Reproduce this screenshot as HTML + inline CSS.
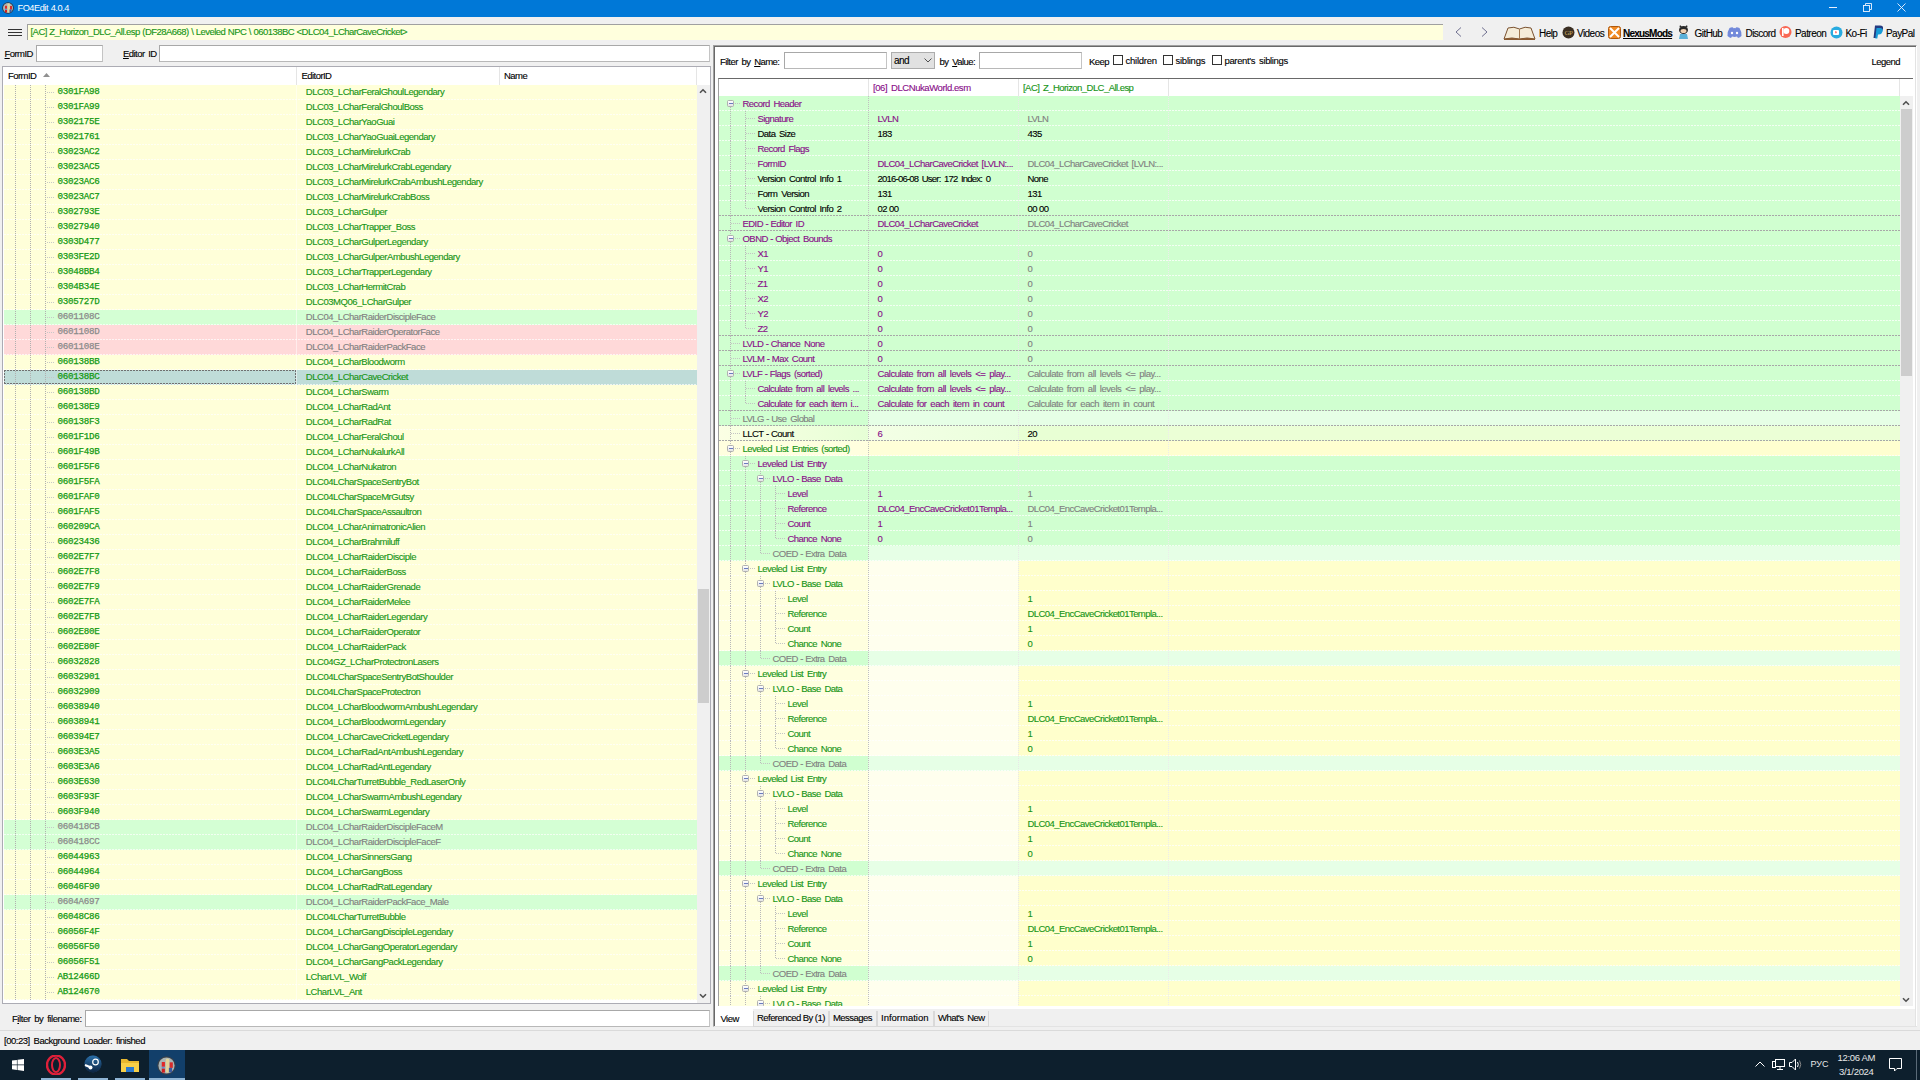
<!DOCTYPE html><html><head><meta charset="utf-8"><style>
*{margin:0;padding:0;box-sizing:border-box}
html,body{width:1920px;height:1080px;overflow:hidden}
body{background:#f0f0f0;position:relative;font-family:"Liberation Sans",sans-serif;font-size:9.5px;letter-spacing:-0.55px;word-spacing:1.6px;color:#000}
.a{position:absolute}
.t{position:absolute;white-space:nowrap;-webkit-text-stroke:0.12px currentColor}
.m{font-family:"Liberation Mono",monospace;letter-spacing:-0.25px;-webkit-text-stroke:0.25px currentColor}
u{text-decoration:underline}
</style></head><body>

<div class="a" style="left:0px;top:0px;width:1920px;height:17px;background:#0078d7"></div>
<svg class="a" style="left:1.5px;top:2px" width="12" height="12" viewBox="0 0 12 12"><circle cx="6" cy="6" r="5.8" fill="#2a3038"/><circle cx="6" cy="6" r="5" fill="#a9b4b6"/><rect x="5.5" y="1.5" width="2.3" height="9" rx="1" fill="#e2d49a"/><rect x="3" y="3.8" width="2" height="3" fill="#e02828"/><rect x="3" y="6.8" width="1.8" height="1.2" fill="#6a8ac8"/><rect x="3" y="8" width="2" height="2.5" fill="#d02020"/><rect x="8" y="4" width="2" height="3.5" fill="#d82c2c"/><rect x="7.5" y="7.5" width="2" height="2.8" fill="#3a5aa0"/></svg>
<div class="t" style="left:17.5px;top:0.0px;line-height:17px;height:17px;color:#fff;font-size:9.2px;letter-spacing:-0.45px;word-spacing:0.5px;-webkit-text-stroke:0">FO4Edit 4.0.4</div>
<div class="a" style="left:1829px;top:7px;width:8px;height:1px;background:#e8f0ff"></div>
<svg class="a" style="left:1863px;top:3px" width="9" height="9" viewBox="0 0 9 9"><path d="M2.5 2V0.5H8.5V6.5H7" fill="none" stroke="#eef4ff" stroke-width="0.9"/><rect x="0.5" y="2.5" width="6" height="6" fill="none" stroke="#eef4ff" stroke-width="0.9"/></svg>
<svg class="a" style="left:1897px;top:3px" width="9" height="9" viewBox="0 0 9 9"><path d="M0.5 0.5L8.5 8.5M8.5 0.5L0.5 8.5" stroke="#eef4ff" stroke-width="0.9"/></svg>
<div class="a" style="left:8px;top:29px;width:14px;height:1px;background:#333"></div>
<div class="a" style="left:8px;top:32px;width:14px;height:1px;background:#333"></div>
<div class="a" style="left:8px;top:35px;width:14px;height:1px;background:#333"></div>
<div class="a" style="left:27px;top:24px;width:1416px;height:16px;background:#ffffdd;border-top:1px solid #a0a0a0;border-left:1px solid #a0a0a0"></div>
<div class="t" style="left:30.5px;top:24.0px;line-height:15px;height:15px;color:#159415;word-spacing:0.5px">[AC] Z_Horizon_DLC_All.esp (DF28A668) \ Leveled NPC \ 060138BC &lt;DLC04_LCharCaveCricket&gt;</div>
<svg class="a" style="left:1455px;top:27px" width="7" height="10" viewBox="0 0 7 10"><path d="M6 0.5L1 5L6 9.5" fill="none" stroke="#707090" stroke-width="1"/></svg>
<svg class="a" style="left:1481px;top:27px" width="7" height="10" viewBox="0 0 7 10"><path d="M1 0.5L6 5L1 9.5" fill="none" stroke="#707090" stroke-width="1"/></svg>
<svg class="a" style="left:1503px;top:26px" width="33" height="14" viewBox="0 0 33 14"><path d="M1 13L5 2Q11 0 16.5 3Q22 0 28 2L32 13Q24 11 16.5 13Q9 11 1 13Z" fill="#f5ecd8" stroke="#7a5230" stroke-width="1"/><path d="M16.5 3V13" stroke="#a07850" stroke-width="1"/><path d="M1 13Q9 11 16.5 13Q24 11 32 13V14H1Z" fill="#8a5a30"/></svg>
<div class="t" style="left:1539px;top:25.5px;line-height:15px;height:15px;font-size:10px">Help</div>
<svg class="a" style="left:1562px;top:26px" width="13" height="13" viewBox="0 0 13 13"><circle cx="6.5" cy="6.5" r="6" fill="#3a2e22"/><text x="6.5" y="9.3" font-size="7" text-anchor="middle" fill="#c8a860" font-family="Liberation Serif">GP</text></svg>
<div class="t" style="left:1577px;top:25.5px;line-height:15px;height:15px;font-size:10px">Videos</div>
<svg class="a" style="left:1608px;top:26px" width="13" height="13" viewBox="0 0 13 13"><rect x="0.5" y="0.5" width="12" height="12" rx="2" fill="#f08a24" stroke="#b05a10"/><path d="M2 2L11 11M11 2L2 11" stroke="#fff" stroke-width="2"/></svg>
<div class="t" style="left:1623px;top:25.5px;line-height:15px;height:15px;font-size:10px;letter-spacing:-0.78px"><b><u>NexusMods</u></b></div>
<svg class="a" style="left:1677px;top:25px" width="13" height="15" viewBox="0 0 13 15"><ellipse cx="6.5" cy="5" rx="4.5" ry="4" fill="#2a2a2a"/><path d="M2.5 2L3 0L5 2M10.5 2L10 0L8 2" fill="#2a2a2a"/><ellipse cx="6.5" cy="6" rx="3" ry="2" fill="#f0d0b0"/><path d="M3 9H10L11 14H2Z" fill="#5ab0d8"/></svg>
<div class="t" style="left:1694.5px;top:25.5px;line-height:15px;height:15px;font-size:10px">GitHub</div>
<svg class="a" style="left:1727px;top:27px" width="15" height="11" viewBox="0 0 15 11"><path d="M2.5 1Q5 0 6 0.5L6.5 1.2Q7.5 1 8.5 1.2L9 0.5Q10 0 12.5 1Q14.8 4.5 14.5 9Q13 10.5 11 11L10 9.5Q7.5 10.4 5 9.5L4 11Q2 10.5 0.5 9Q0.2 4.5 2.5 1Z" fill="#7289da"/><circle cx="5" cy="6" r="1.2" fill="#fff"/><circle cx="10" cy="6" r="1.2" fill="#fff"/></svg>
<div class="t" style="left:1745.5px;top:25.5px;line-height:15px;height:15px;font-size:10px">Discord</div>
<svg class="a" style="left:1779px;top:25px" width="13" height="14" viewBox="0 0 13 14"><circle cx="6.5" cy="7" r="6" fill="#f96854"/><circle cx="7.3" cy="6" r="3" fill="#fff"/><rect x="3" y="3" width="1.6" height="8" fill="#fff"/></svg>
<div class="t" style="left:1795px;top:25.5px;line-height:15px;height:15px;font-size:10px">Patreon</div>
<svg class="a" style="left:1830px;top:26px" width="13" height="13" viewBox="0 0 13 13"><circle cx="6.5" cy="6.5" r="6" fill="#29abe0"/><rect x="3" y="4" width="6" height="5" rx="1" fill="#fff"/><path d="M5 5.5Q6 4.8 7 6Q6 7.5 6 7.8Q5 7 5 5.5Z" fill="#ff5e5b"/></svg>
<div class="t" style="left:1845.5px;top:25.5px;line-height:15px;height:15px;font-size:10px">Ko-Fi</div>
<svg class="a" style="left:1873px;top:25px" width="11" height="14" viewBox="0 0 11 14"><path d="M2 0.5H7Q10.5 0.5 10 3.8Q9.4 7.5 5.5 7.5H4L3 13H0.5Z" fill="#253b80"/><path d="M3.5 3H7.5Q10.5 3.5 9.5 6.8Q8.7 9.5 6 9.5H5L4.3 13.5H2.3Z" fill="#179bd7"/></svg>
<div class="t" style="left:1886px;top:25.5px;line-height:15px;height:15px;font-size:10px">PayPal</div>
<div class="t" style="left:4.5px;top:46.0px;line-height:15px;height:15px;"><u>F</u>ormID</div>
<div class="a" style="left:36px;top:45px;width:67px;height:17px;background:#fff;border:1px solid #a8a8a8;border-right-color:#c4c4c4;border-bottom-color:#b8b8b8"></div>
<div class="t" style="left:123px;top:46.0px;line-height:15px;height:15px;"><u>E</u>ditor ID</div>
<div class="a" style="left:159px;top:45px;width:551px;height:17px;background:#fff;border:1px solid #a8a8a8;border-right-color:#c4c4c4;border-bottom-color:#b8b8b8"></div>
<div class="a" style="left:2px;top:66px;width:709px;height:938px;border:1px solid #acacb4;background:#fff"></div>
<div class="t" style="left:8px;top:67.8px;line-height:15px;height:15px;">FormID</div>
<svg class="a" style="left:43px;top:73px" width="7" height="4" viewBox="0 0 7 4"><path d="M0 4L3.5 0L7 4Z" fill="#909090"/></svg>
<div class="a" style="left:296px;top:67px;width:1px;height:18px;background:#e5e5e5"></div>
<div class="t" style="left:301.5px;top:67.8px;line-height:15px;height:15px;">EditorID</div>
<div class="a" style="left:499px;top:67px;width:1px;height:18px;background:#e5e5e5"></div>
<div class="a" style="left:696px;top:67px;width:1px;height:18px;background:#e5e5e5"></div>
<div class="t" style="left:504px;top:67.8px;line-height:15px;height:15px;">Name</div>
<div class="a" style="left:4px;top:85px;width:693px;height:15px;background:#ffffd9"></div>
<div class="a" style="left:4px;top:99px;width:693px;height:1px;background:repeating-linear-gradient(to right,rgba(255,255,255,0.7) 0 2px,transparent 2px 3px)"></div>
<div class="a" style="left:47px;top:92px;width:8px;height:1px;background:repeating-linear-gradient(to right,#c8c8c8 0 1px,transparent 1px 2px)"></div>
<div class="t m" style="left:57.5px;top:84px;line-height:15px;height:15px;color:#139a13;font-size:9.2px">0301FA98</div>
<div class="t" style="left:305.8px;top:84.0px;line-height:15px;height:15px;color:#159415;letter-spacing:-0.47px">DLC03_LCharFeralGhoulLegendary</div>
<div class="a" style="left:4px;top:100px;width:693px;height:15px;background:#ffffd9"></div>
<div class="a" style="left:4px;top:114px;width:693px;height:1px;background:repeating-linear-gradient(to right,rgba(255,255,255,0.7) 0 2px,transparent 2px 3px)"></div>
<div class="a" style="left:47px;top:107px;width:8px;height:1px;background:repeating-linear-gradient(to right,#c8c8c8 0 1px,transparent 1px 2px)"></div>
<div class="t m" style="left:57.5px;top:99px;line-height:15px;height:15px;color:#139a13;font-size:9.2px">0301FA99</div>
<div class="t" style="left:305.8px;top:99.0px;line-height:15px;height:15px;color:#159415;letter-spacing:-0.47px">DLC03_LCharFeralGhoulBoss</div>
<div class="a" style="left:4px;top:115px;width:693px;height:15px;background:#ffffd9"></div>
<div class="a" style="left:4px;top:129px;width:693px;height:1px;background:repeating-linear-gradient(to right,rgba(255,255,255,0.7) 0 2px,transparent 2px 3px)"></div>
<div class="a" style="left:47px;top:122px;width:8px;height:1px;background:repeating-linear-gradient(to right,#c8c8c8 0 1px,transparent 1px 2px)"></div>
<div class="t m" style="left:57.5px;top:114px;line-height:15px;height:15px;color:#139a13;font-size:9.2px">0302175E</div>
<div class="t" style="left:305.8px;top:114.0px;line-height:15px;height:15px;color:#159415;letter-spacing:-0.47px">DLC03_LCharYaoGuai</div>
<div class="a" style="left:4px;top:130px;width:693px;height:15px;background:#ffffd9"></div>
<div class="a" style="left:4px;top:144px;width:693px;height:1px;background:repeating-linear-gradient(to right,rgba(255,255,255,0.7) 0 2px,transparent 2px 3px)"></div>
<div class="a" style="left:47px;top:137px;width:8px;height:1px;background:repeating-linear-gradient(to right,#c8c8c8 0 1px,transparent 1px 2px)"></div>
<div class="t m" style="left:57.5px;top:129px;line-height:15px;height:15px;color:#139a13;font-size:9.2px">03021761</div>
<div class="t" style="left:305.8px;top:129.0px;line-height:15px;height:15px;color:#159415;letter-spacing:-0.47px">DLC03_LCharYaoGuaiLegendary</div>
<div class="a" style="left:4px;top:145px;width:693px;height:15px;background:#ffffd9"></div>
<div class="a" style="left:4px;top:159px;width:693px;height:1px;background:repeating-linear-gradient(to right,rgba(255,255,255,0.7) 0 2px,transparent 2px 3px)"></div>
<div class="a" style="left:47px;top:152px;width:8px;height:1px;background:repeating-linear-gradient(to right,#c8c8c8 0 1px,transparent 1px 2px)"></div>
<div class="t m" style="left:57.5px;top:144px;line-height:15px;height:15px;color:#139a13;font-size:9.2px">03023AC2</div>
<div class="t" style="left:305.8px;top:144.0px;line-height:15px;height:15px;color:#159415;letter-spacing:-0.47px">DLC03_LCharMirelurkCrab</div>
<div class="a" style="left:4px;top:160px;width:693px;height:15px;background:#ffffd9"></div>
<div class="a" style="left:4px;top:174px;width:693px;height:1px;background:repeating-linear-gradient(to right,rgba(255,255,255,0.7) 0 2px,transparent 2px 3px)"></div>
<div class="a" style="left:47px;top:167px;width:8px;height:1px;background:repeating-linear-gradient(to right,#c8c8c8 0 1px,transparent 1px 2px)"></div>
<div class="t m" style="left:57.5px;top:159px;line-height:15px;height:15px;color:#139a13;font-size:9.2px">03023AC5</div>
<div class="t" style="left:305.8px;top:159.0px;line-height:15px;height:15px;color:#159415;letter-spacing:-0.47px">DLC03_LCharMirelurkCrabLegendary</div>
<div class="a" style="left:4px;top:175px;width:693px;height:15px;background:#ffffd9"></div>
<div class="a" style="left:4px;top:189px;width:693px;height:1px;background:repeating-linear-gradient(to right,rgba(255,255,255,0.7) 0 2px,transparent 2px 3px)"></div>
<div class="a" style="left:47px;top:182px;width:8px;height:1px;background:repeating-linear-gradient(to right,#c8c8c8 0 1px,transparent 1px 2px)"></div>
<div class="t m" style="left:57.5px;top:174px;line-height:15px;height:15px;color:#139a13;font-size:9.2px">03023AC6</div>
<div class="t" style="left:305.8px;top:174.0px;line-height:15px;height:15px;color:#159415;letter-spacing:-0.47px">DLC03_LCharMirelurkCrabAmbushLegendary</div>
<div class="a" style="left:4px;top:190px;width:693px;height:15px;background:#ffffd9"></div>
<div class="a" style="left:4px;top:204px;width:693px;height:1px;background:repeating-linear-gradient(to right,rgba(255,255,255,0.7) 0 2px,transparent 2px 3px)"></div>
<div class="a" style="left:47px;top:197px;width:8px;height:1px;background:repeating-linear-gradient(to right,#c8c8c8 0 1px,transparent 1px 2px)"></div>
<div class="t m" style="left:57.5px;top:189px;line-height:15px;height:15px;color:#139a13;font-size:9.2px">03023AC7</div>
<div class="t" style="left:305.8px;top:189.0px;line-height:15px;height:15px;color:#159415;letter-spacing:-0.47px">DLC03_LCharMirelurkCrabBoss</div>
<div class="a" style="left:4px;top:205px;width:693px;height:15px;background:#ffffd9"></div>
<div class="a" style="left:4px;top:219px;width:693px;height:1px;background:repeating-linear-gradient(to right,rgba(255,255,255,0.7) 0 2px,transparent 2px 3px)"></div>
<div class="a" style="left:47px;top:212px;width:8px;height:1px;background:repeating-linear-gradient(to right,#c8c8c8 0 1px,transparent 1px 2px)"></div>
<div class="t m" style="left:57.5px;top:204px;line-height:15px;height:15px;color:#139a13;font-size:9.2px">0302793E</div>
<div class="t" style="left:305.8px;top:204.0px;line-height:15px;height:15px;color:#159415;letter-spacing:-0.47px">DLC03_LCharGulper</div>
<div class="a" style="left:4px;top:220px;width:693px;height:15px;background:#ffffd9"></div>
<div class="a" style="left:4px;top:234px;width:693px;height:1px;background:repeating-linear-gradient(to right,rgba(255,255,255,0.7) 0 2px,transparent 2px 3px)"></div>
<div class="a" style="left:47px;top:227px;width:8px;height:1px;background:repeating-linear-gradient(to right,#c8c8c8 0 1px,transparent 1px 2px)"></div>
<div class="t m" style="left:57.5px;top:219px;line-height:15px;height:15px;color:#139a13;font-size:9.2px">03027940</div>
<div class="t" style="left:305.8px;top:219.0px;line-height:15px;height:15px;color:#159415;letter-spacing:-0.47px">DLC03_LCharTrapper_Boss</div>
<div class="a" style="left:4px;top:235px;width:693px;height:15px;background:#ffffd9"></div>
<div class="a" style="left:4px;top:249px;width:693px;height:1px;background:repeating-linear-gradient(to right,rgba(255,255,255,0.7) 0 2px,transparent 2px 3px)"></div>
<div class="a" style="left:47px;top:242px;width:8px;height:1px;background:repeating-linear-gradient(to right,#c8c8c8 0 1px,transparent 1px 2px)"></div>
<div class="t m" style="left:57.5px;top:234px;line-height:15px;height:15px;color:#139a13;font-size:9.2px">0303D477</div>
<div class="t" style="left:305.8px;top:234.0px;line-height:15px;height:15px;color:#159415;letter-spacing:-0.47px">DLC03_LCharGulperLegendary</div>
<div class="a" style="left:4px;top:250px;width:693px;height:15px;background:#ffffd9"></div>
<div class="a" style="left:4px;top:264px;width:693px;height:1px;background:repeating-linear-gradient(to right,rgba(255,255,255,0.7) 0 2px,transparent 2px 3px)"></div>
<div class="a" style="left:47px;top:257px;width:8px;height:1px;background:repeating-linear-gradient(to right,#c8c8c8 0 1px,transparent 1px 2px)"></div>
<div class="t m" style="left:57.5px;top:249px;line-height:15px;height:15px;color:#139a13;font-size:9.2px">0303FE2D</div>
<div class="t" style="left:305.8px;top:249.0px;line-height:15px;height:15px;color:#159415;letter-spacing:-0.47px">DLC03_LCharGulperAmbushLegendary</div>
<div class="a" style="left:4px;top:265px;width:693px;height:15px;background:#ffffd9"></div>
<div class="a" style="left:4px;top:279px;width:693px;height:1px;background:repeating-linear-gradient(to right,rgba(255,255,255,0.7) 0 2px,transparent 2px 3px)"></div>
<div class="a" style="left:47px;top:272px;width:8px;height:1px;background:repeating-linear-gradient(to right,#c8c8c8 0 1px,transparent 1px 2px)"></div>
<div class="t m" style="left:57.5px;top:264px;line-height:15px;height:15px;color:#139a13;font-size:9.2px">03048BB4</div>
<div class="t" style="left:305.8px;top:264.0px;line-height:15px;height:15px;color:#159415;letter-spacing:-0.47px">DLC03_LCharTrapperLegendary</div>
<div class="a" style="left:4px;top:280px;width:693px;height:15px;background:#ffffd9"></div>
<div class="a" style="left:4px;top:294px;width:693px;height:1px;background:repeating-linear-gradient(to right,rgba(255,255,255,0.7) 0 2px,transparent 2px 3px)"></div>
<div class="a" style="left:47px;top:287px;width:8px;height:1px;background:repeating-linear-gradient(to right,#c8c8c8 0 1px,transparent 1px 2px)"></div>
<div class="t m" style="left:57.5px;top:279px;line-height:15px;height:15px;color:#139a13;font-size:9.2px">0304B34E</div>
<div class="t" style="left:305.8px;top:279.0px;line-height:15px;height:15px;color:#159415;letter-spacing:-0.47px">DLC03_LCharHermitCrab</div>
<div class="a" style="left:4px;top:295px;width:693px;height:15px;background:#ffffd9"></div>
<div class="a" style="left:4px;top:309px;width:693px;height:1px;background:repeating-linear-gradient(to right,rgba(255,255,255,0.7) 0 2px,transparent 2px 3px)"></div>
<div class="a" style="left:47px;top:302px;width:8px;height:1px;background:repeating-linear-gradient(to right,#c8c8c8 0 1px,transparent 1px 2px)"></div>
<div class="t m" style="left:57.5px;top:294px;line-height:15px;height:15px;color:#139a13;font-size:9.2px">0305727D</div>
<div class="t" style="left:305.8px;top:294.0px;line-height:15px;height:15px;color:#159415;letter-spacing:-0.47px">DLC03MQ06_LCharGulper</div>
<div class="a" style="left:4px;top:310px;width:693px;height:15px;background:#d4ffd4"></div>
<div class="a" style="left:4px;top:324px;width:693px;height:1px;background:repeating-linear-gradient(to right,rgba(255,255,255,0.7) 0 2px,transparent 2px 3px)"></div>
<div class="a" style="left:47px;top:317px;width:8px;height:1px;background:repeating-linear-gradient(to right,#c8c8c8 0 1px,transparent 1px 2px)"></div>
<div class="t m" style="left:57.5px;top:309px;line-height:15px;height:15px;color:#8a8a8a;font-size:9.2px">0601108C</div>
<div class="t" style="left:305.8px;top:309.0px;line-height:15px;height:15px;color:#808080;letter-spacing:-0.47px">DLC04_LCharRaiderDiscipleFace</div>
<div class="a" style="left:4px;top:325px;width:693px;height:15px;background:#ffd9d9"></div>
<div class="a" style="left:4px;top:339px;width:693px;height:1px;background:repeating-linear-gradient(to right,rgba(255,255,255,0.7) 0 2px,transparent 2px 3px)"></div>
<div class="a" style="left:47px;top:332px;width:8px;height:1px;background:repeating-linear-gradient(to right,#c8c8c8 0 1px,transparent 1px 2px)"></div>
<div class="t m" style="left:57.5px;top:324px;line-height:15px;height:15px;color:#8a8a8a;font-size:9.2px">0601108D</div>
<div class="t" style="left:305.8px;top:324.0px;line-height:15px;height:15px;color:#808080;letter-spacing:-0.47px">DLC04_LCharRaiderOperatorFace</div>
<div class="a" style="left:4px;top:340px;width:693px;height:15px;background:#ffd9d9"></div>
<div class="a" style="left:4px;top:354px;width:693px;height:1px;background:repeating-linear-gradient(to right,rgba(255,255,255,0.7) 0 2px,transparent 2px 3px)"></div>
<div class="a" style="left:47px;top:347px;width:8px;height:1px;background:repeating-linear-gradient(to right,#c8c8c8 0 1px,transparent 1px 2px)"></div>
<div class="t m" style="left:57.5px;top:339px;line-height:15px;height:15px;color:#8a8a8a;font-size:9.2px">0601108E</div>
<div class="t" style="left:305.8px;top:339.0px;line-height:15px;height:15px;color:#808080;letter-spacing:-0.47px">DLC04_LCharRaiderPackFace</div>
<div class="a" style="left:4px;top:355px;width:693px;height:15px;background:#ffffd9"></div>
<div class="a" style="left:4px;top:369px;width:693px;height:1px;background:repeating-linear-gradient(to right,rgba(255,255,255,0.7) 0 2px,transparent 2px 3px)"></div>
<div class="a" style="left:47px;top:362px;width:8px;height:1px;background:repeating-linear-gradient(to right,#c8c8c8 0 1px,transparent 1px 2px)"></div>
<div class="t m" style="left:57.5px;top:354px;line-height:15px;height:15px;color:#139a13;font-size:9.2px">060138BB</div>
<div class="t" style="left:305.8px;top:354.0px;line-height:15px;height:15px;color:#159415;letter-spacing:-0.47px">DLC04_LCharBloodworm</div>
<div class="a" style="left:4px;top:370px;width:693px;height:15px;background:#bfdcd8"></div>
<div class="a" style="left:4px;top:384px;width:693px;height:1px;background:repeating-linear-gradient(to right,rgba(255,255,255,0.7) 0 2px,transparent 2px 3px)"></div>
<div class="a" style="left:47px;top:377px;width:8px;height:1px;background:repeating-linear-gradient(to right,#c8c8c8 0 1px,transparent 1px 2px)"></div>
<div class="t m" style="left:57.5px;top:369px;line-height:15px;height:15px;color:#139a13;font-size:9.2px">060138BC</div>
<div class="t" style="left:305.8px;top:369.0px;line-height:15px;height:15px;color:#159415;letter-spacing:-0.47px">DLC04_LCharCaveCricket</div>
<div class="a" style="left:4px;top:370px;width:292px;height:1px;background:repeating-linear-gradient(to right,#707070 0 2px,transparent 2px 3px)"></div>
<div class="a" style="left:4px;top:383px;width:292px;height:1px;background:repeating-linear-gradient(to right,#707070 0 2px,transparent 2px 3px)"></div>
<div class="a" style="left:4px;top:370px;width:1px;height:14px;background:repeating-linear-gradient(to bottom,#707070 0 2px,transparent 2px 3px)"></div>
<div class="a" style="left:295px;top:370px;width:1px;height:14px;background:repeating-linear-gradient(to bottom,#707070 0 2px,transparent 2px 3px)"></div>
<div class="a" style="left:4px;top:385px;width:693px;height:15px;background:#ffffd9"></div>
<div class="a" style="left:4px;top:399px;width:693px;height:1px;background:repeating-linear-gradient(to right,rgba(255,255,255,0.7) 0 2px,transparent 2px 3px)"></div>
<div class="a" style="left:47px;top:392px;width:8px;height:1px;background:repeating-linear-gradient(to right,#c8c8c8 0 1px,transparent 1px 2px)"></div>
<div class="t m" style="left:57.5px;top:384px;line-height:15px;height:15px;color:#139a13;font-size:9.2px">060138BD</div>
<div class="t" style="left:305.8px;top:384.0px;line-height:15px;height:15px;color:#159415;letter-spacing:-0.47px">DLC04_LCharSwarm</div>
<div class="a" style="left:4px;top:400px;width:693px;height:15px;background:#ffffd9"></div>
<div class="a" style="left:4px;top:414px;width:693px;height:1px;background:repeating-linear-gradient(to right,rgba(255,255,255,0.7) 0 2px,transparent 2px 3px)"></div>
<div class="a" style="left:47px;top:407px;width:8px;height:1px;background:repeating-linear-gradient(to right,#c8c8c8 0 1px,transparent 1px 2px)"></div>
<div class="t m" style="left:57.5px;top:399px;line-height:15px;height:15px;color:#139a13;font-size:9.2px">060138E9</div>
<div class="t" style="left:305.8px;top:399.0px;line-height:15px;height:15px;color:#159415;letter-spacing:-0.47px">DLC04_LCharRadAnt</div>
<div class="a" style="left:4px;top:415px;width:693px;height:15px;background:#ffffd9"></div>
<div class="a" style="left:4px;top:429px;width:693px;height:1px;background:repeating-linear-gradient(to right,rgba(255,255,255,0.7) 0 2px,transparent 2px 3px)"></div>
<div class="a" style="left:47px;top:422px;width:8px;height:1px;background:repeating-linear-gradient(to right,#c8c8c8 0 1px,transparent 1px 2px)"></div>
<div class="t m" style="left:57.5px;top:414px;line-height:15px;height:15px;color:#139a13;font-size:9.2px">060138F3</div>
<div class="t" style="left:305.8px;top:414.0px;line-height:15px;height:15px;color:#159415;letter-spacing:-0.47px">DLC04_LCharRadRat</div>
<div class="a" style="left:4px;top:430px;width:693px;height:15px;background:#ffffd9"></div>
<div class="a" style="left:4px;top:444px;width:693px;height:1px;background:repeating-linear-gradient(to right,rgba(255,255,255,0.7) 0 2px,transparent 2px 3px)"></div>
<div class="a" style="left:47px;top:437px;width:8px;height:1px;background:repeating-linear-gradient(to right,#c8c8c8 0 1px,transparent 1px 2px)"></div>
<div class="t m" style="left:57.5px;top:429px;line-height:15px;height:15px;color:#139a13;font-size:9.2px">0601F1D6</div>
<div class="t" style="left:305.8px;top:429.0px;line-height:15px;height:15px;color:#159415;letter-spacing:-0.47px">DLC04_LCharFeralGhoul</div>
<div class="a" style="left:4px;top:445px;width:693px;height:15px;background:#ffffd9"></div>
<div class="a" style="left:4px;top:459px;width:693px;height:1px;background:repeating-linear-gradient(to right,rgba(255,255,255,0.7) 0 2px,transparent 2px 3px)"></div>
<div class="a" style="left:47px;top:452px;width:8px;height:1px;background:repeating-linear-gradient(to right,#c8c8c8 0 1px,transparent 1px 2px)"></div>
<div class="t m" style="left:57.5px;top:444px;line-height:15px;height:15px;color:#139a13;font-size:9.2px">0601F49B</div>
<div class="t" style="left:305.8px;top:444.0px;line-height:15px;height:15px;color:#159415;letter-spacing:-0.47px">DLC04_LCharNukalurkAll</div>
<div class="a" style="left:4px;top:460px;width:693px;height:15px;background:#ffffd9"></div>
<div class="a" style="left:4px;top:474px;width:693px;height:1px;background:repeating-linear-gradient(to right,rgba(255,255,255,0.7) 0 2px,transparent 2px 3px)"></div>
<div class="a" style="left:47px;top:467px;width:8px;height:1px;background:repeating-linear-gradient(to right,#c8c8c8 0 1px,transparent 1px 2px)"></div>
<div class="t m" style="left:57.5px;top:459px;line-height:15px;height:15px;color:#139a13;font-size:9.2px">0601F5F6</div>
<div class="t" style="left:305.8px;top:459.0px;line-height:15px;height:15px;color:#159415;letter-spacing:-0.47px">DLC04_LCharNukatron</div>
<div class="a" style="left:4px;top:475px;width:693px;height:15px;background:#ffffd9"></div>
<div class="a" style="left:4px;top:489px;width:693px;height:1px;background:repeating-linear-gradient(to right,rgba(255,255,255,0.7) 0 2px,transparent 2px 3px)"></div>
<div class="a" style="left:47px;top:482px;width:8px;height:1px;background:repeating-linear-gradient(to right,#c8c8c8 0 1px,transparent 1px 2px)"></div>
<div class="t m" style="left:57.5px;top:474px;line-height:15px;height:15px;color:#139a13;font-size:9.2px">0601F5FA</div>
<div class="t" style="left:305.8px;top:474.0px;line-height:15px;height:15px;color:#159415;letter-spacing:-0.47px">DLC04LCharSpaceSentryBot</div>
<div class="a" style="left:4px;top:490px;width:693px;height:15px;background:#ffffd9"></div>
<div class="a" style="left:4px;top:504px;width:693px;height:1px;background:repeating-linear-gradient(to right,rgba(255,255,255,0.7) 0 2px,transparent 2px 3px)"></div>
<div class="a" style="left:47px;top:497px;width:8px;height:1px;background:repeating-linear-gradient(to right,#c8c8c8 0 1px,transparent 1px 2px)"></div>
<div class="t m" style="left:57.5px;top:489px;line-height:15px;height:15px;color:#139a13;font-size:9.2px">0601FAF0</div>
<div class="t" style="left:305.8px;top:489.0px;line-height:15px;height:15px;color:#159415;letter-spacing:-0.47px">DLC04LCharSpaceMrGutsy</div>
<div class="a" style="left:4px;top:505px;width:693px;height:15px;background:#ffffd9"></div>
<div class="a" style="left:4px;top:519px;width:693px;height:1px;background:repeating-linear-gradient(to right,rgba(255,255,255,0.7) 0 2px,transparent 2px 3px)"></div>
<div class="a" style="left:47px;top:512px;width:8px;height:1px;background:repeating-linear-gradient(to right,#c8c8c8 0 1px,transparent 1px 2px)"></div>
<div class="t m" style="left:57.5px;top:504px;line-height:15px;height:15px;color:#139a13;font-size:9.2px">0601FAF5</div>
<div class="t" style="left:305.8px;top:504.0px;line-height:15px;height:15px;color:#159415;letter-spacing:-0.47px">DLC04LCharSpaceAssaultron</div>
<div class="a" style="left:4px;top:520px;width:693px;height:15px;background:#ffffd9"></div>
<div class="a" style="left:4px;top:534px;width:693px;height:1px;background:repeating-linear-gradient(to right,rgba(255,255,255,0.7) 0 2px,transparent 2px 3px)"></div>
<div class="a" style="left:47px;top:527px;width:8px;height:1px;background:repeating-linear-gradient(to right,#c8c8c8 0 1px,transparent 1px 2px)"></div>
<div class="t m" style="left:57.5px;top:519px;line-height:15px;height:15px;color:#139a13;font-size:9.2px">060209CA</div>
<div class="t" style="left:305.8px;top:519.0px;line-height:15px;height:15px;color:#159415;letter-spacing:-0.47px">DLC04_LCharAnimatronicAlien</div>
<div class="a" style="left:4px;top:535px;width:693px;height:15px;background:#ffffd9"></div>
<div class="a" style="left:4px;top:549px;width:693px;height:1px;background:repeating-linear-gradient(to right,rgba(255,255,255,0.7) 0 2px,transparent 2px 3px)"></div>
<div class="a" style="left:47px;top:542px;width:8px;height:1px;background:repeating-linear-gradient(to right,#c8c8c8 0 1px,transparent 1px 2px)"></div>
<div class="t m" style="left:57.5px;top:534px;line-height:15px;height:15px;color:#139a13;font-size:9.2px">06023436</div>
<div class="t" style="left:305.8px;top:534.0px;line-height:15px;height:15px;color:#159415;letter-spacing:-0.47px">DLC04_LCharBrahmiluff</div>
<div class="a" style="left:4px;top:550px;width:693px;height:15px;background:#ffffd9"></div>
<div class="a" style="left:4px;top:564px;width:693px;height:1px;background:repeating-linear-gradient(to right,rgba(255,255,255,0.7) 0 2px,transparent 2px 3px)"></div>
<div class="a" style="left:47px;top:557px;width:8px;height:1px;background:repeating-linear-gradient(to right,#c8c8c8 0 1px,transparent 1px 2px)"></div>
<div class="t m" style="left:57.5px;top:549px;line-height:15px;height:15px;color:#139a13;font-size:9.2px">0602E7F7</div>
<div class="t" style="left:305.8px;top:549.0px;line-height:15px;height:15px;color:#159415;letter-spacing:-0.47px">DLC04_LCharRaiderDisciple</div>
<div class="a" style="left:4px;top:565px;width:693px;height:15px;background:#ffffd9"></div>
<div class="a" style="left:4px;top:579px;width:693px;height:1px;background:repeating-linear-gradient(to right,rgba(255,255,255,0.7) 0 2px,transparent 2px 3px)"></div>
<div class="a" style="left:47px;top:572px;width:8px;height:1px;background:repeating-linear-gradient(to right,#c8c8c8 0 1px,transparent 1px 2px)"></div>
<div class="t m" style="left:57.5px;top:564px;line-height:15px;height:15px;color:#139a13;font-size:9.2px">0602E7F8</div>
<div class="t" style="left:305.8px;top:564.0px;line-height:15px;height:15px;color:#159415;letter-spacing:-0.47px">DLC04_LCharRaiderBoss</div>
<div class="a" style="left:4px;top:580px;width:693px;height:15px;background:#ffffd9"></div>
<div class="a" style="left:4px;top:594px;width:693px;height:1px;background:repeating-linear-gradient(to right,rgba(255,255,255,0.7) 0 2px,transparent 2px 3px)"></div>
<div class="a" style="left:47px;top:587px;width:8px;height:1px;background:repeating-linear-gradient(to right,#c8c8c8 0 1px,transparent 1px 2px)"></div>
<div class="t m" style="left:57.5px;top:579px;line-height:15px;height:15px;color:#139a13;font-size:9.2px">0602E7F9</div>
<div class="t" style="left:305.8px;top:579.0px;line-height:15px;height:15px;color:#159415;letter-spacing:-0.47px">DLC04_LCharRaiderGrenade</div>
<div class="a" style="left:4px;top:595px;width:693px;height:15px;background:#ffffd9"></div>
<div class="a" style="left:4px;top:609px;width:693px;height:1px;background:repeating-linear-gradient(to right,rgba(255,255,255,0.7) 0 2px,transparent 2px 3px)"></div>
<div class="a" style="left:47px;top:602px;width:8px;height:1px;background:repeating-linear-gradient(to right,#c8c8c8 0 1px,transparent 1px 2px)"></div>
<div class="t m" style="left:57.5px;top:594px;line-height:15px;height:15px;color:#139a13;font-size:9.2px">0602E7FA</div>
<div class="t" style="left:305.8px;top:594.0px;line-height:15px;height:15px;color:#159415;letter-spacing:-0.47px">DLC04_LCharRaiderMelee</div>
<div class="a" style="left:4px;top:610px;width:693px;height:15px;background:#ffffd9"></div>
<div class="a" style="left:4px;top:624px;width:693px;height:1px;background:repeating-linear-gradient(to right,rgba(255,255,255,0.7) 0 2px,transparent 2px 3px)"></div>
<div class="a" style="left:47px;top:617px;width:8px;height:1px;background:repeating-linear-gradient(to right,#c8c8c8 0 1px,transparent 1px 2px)"></div>
<div class="t m" style="left:57.5px;top:609px;line-height:15px;height:15px;color:#139a13;font-size:9.2px">0602E7FB</div>
<div class="t" style="left:305.8px;top:609.0px;line-height:15px;height:15px;color:#159415;letter-spacing:-0.47px">DLC04_LCharRaiderLegendary</div>
<div class="a" style="left:4px;top:625px;width:693px;height:15px;background:#ffffd9"></div>
<div class="a" style="left:4px;top:639px;width:693px;height:1px;background:repeating-linear-gradient(to right,rgba(255,255,255,0.7) 0 2px,transparent 2px 3px)"></div>
<div class="a" style="left:47px;top:632px;width:8px;height:1px;background:repeating-linear-gradient(to right,#c8c8c8 0 1px,transparent 1px 2px)"></div>
<div class="t m" style="left:57.5px;top:624px;line-height:15px;height:15px;color:#139a13;font-size:9.2px">0602E80E</div>
<div class="t" style="left:305.8px;top:624.0px;line-height:15px;height:15px;color:#159415;letter-spacing:-0.47px">DLC04_LCharRaiderOperator</div>
<div class="a" style="left:4px;top:640px;width:693px;height:15px;background:#ffffd9"></div>
<div class="a" style="left:4px;top:654px;width:693px;height:1px;background:repeating-linear-gradient(to right,rgba(255,255,255,0.7) 0 2px,transparent 2px 3px)"></div>
<div class="a" style="left:47px;top:647px;width:8px;height:1px;background:repeating-linear-gradient(to right,#c8c8c8 0 1px,transparent 1px 2px)"></div>
<div class="t m" style="left:57.5px;top:639px;line-height:15px;height:15px;color:#139a13;font-size:9.2px">0602E80F</div>
<div class="t" style="left:305.8px;top:639.0px;line-height:15px;height:15px;color:#159415;letter-spacing:-0.47px">DLC04_LCharRaiderPack</div>
<div class="a" style="left:4px;top:655px;width:693px;height:15px;background:#ffffd9"></div>
<div class="a" style="left:4px;top:669px;width:693px;height:1px;background:repeating-linear-gradient(to right,rgba(255,255,255,0.7) 0 2px,transparent 2px 3px)"></div>
<div class="a" style="left:47px;top:662px;width:8px;height:1px;background:repeating-linear-gradient(to right,#c8c8c8 0 1px,transparent 1px 2px)"></div>
<div class="t m" style="left:57.5px;top:654px;line-height:15px;height:15px;color:#139a13;font-size:9.2px">06032828</div>
<div class="t" style="left:305.8px;top:654.0px;line-height:15px;height:15px;color:#159415;letter-spacing:-0.47px">DLC04GZ_LCharProtectronLasers</div>
<div class="a" style="left:4px;top:670px;width:693px;height:15px;background:#ffffd9"></div>
<div class="a" style="left:4px;top:684px;width:693px;height:1px;background:repeating-linear-gradient(to right,rgba(255,255,255,0.7) 0 2px,transparent 2px 3px)"></div>
<div class="a" style="left:47px;top:677px;width:8px;height:1px;background:repeating-linear-gradient(to right,#c8c8c8 0 1px,transparent 1px 2px)"></div>
<div class="t m" style="left:57.5px;top:669px;line-height:15px;height:15px;color:#139a13;font-size:9.2px">06032901</div>
<div class="t" style="left:305.8px;top:669.0px;line-height:15px;height:15px;color:#159415;letter-spacing:-0.47px">DLC04LCharSpaceSentryBotShoulder</div>
<div class="a" style="left:4px;top:685px;width:693px;height:15px;background:#ffffd9"></div>
<div class="a" style="left:4px;top:699px;width:693px;height:1px;background:repeating-linear-gradient(to right,rgba(255,255,255,0.7) 0 2px,transparent 2px 3px)"></div>
<div class="a" style="left:47px;top:692px;width:8px;height:1px;background:repeating-linear-gradient(to right,#c8c8c8 0 1px,transparent 1px 2px)"></div>
<div class="t m" style="left:57.5px;top:684px;line-height:15px;height:15px;color:#139a13;font-size:9.2px">06032909</div>
<div class="t" style="left:305.8px;top:684.0px;line-height:15px;height:15px;color:#159415;letter-spacing:-0.47px">DLC04LCharSpaceProtectron</div>
<div class="a" style="left:4px;top:700px;width:693px;height:15px;background:#ffffd9"></div>
<div class="a" style="left:4px;top:714px;width:693px;height:1px;background:repeating-linear-gradient(to right,rgba(255,255,255,0.7) 0 2px,transparent 2px 3px)"></div>
<div class="a" style="left:47px;top:707px;width:8px;height:1px;background:repeating-linear-gradient(to right,#c8c8c8 0 1px,transparent 1px 2px)"></div>
<div class="t m" style="left:57.5px;top:699px;line-height:15px;height:15px;color:#139a13;font-size:9.2px">06038940</div>
<div class="t" style="left:305.8px;top:699.0px;line-height:15px;height:15px;color:#159415;letter-spacing:-0.47px">DLC04_LCharBloodwormAmbushLegendary</div>
<div class="a" style="left:4px;top:715px;width:693px;height:15px;background:#ffffd9"></div>
<div class="a" style="left:4px;top:729px;width:693px;height:1px;background:repeating-linear-gradient(to right,rgba(255,255,255,0.7) 0 2px,transparent 2px 3px)"></div>
<div class="a" style="left:47px;top:722px;width:8px;height:1px;background:repeating-linear-gradient(to right,#c8c8c8 0 1px,transparent 1px 2px)"></div>
<div class="t m" style="left:57.5px;top:714px;line-height:15px;height:15px;color:#139a13;font-size:9.2px">06038941</div>
<div class="t" style="left:305.8px;top:714.0px;line-height:15px;height:15px;color:#159415;letter-spacing:-0.47px">DLC04_LCharBloodwormLegendary</div>
<div class="a" style="left:4px;top:730px;width:693px;height:15px;background:#ffffd9"></div>
<div class="a" style="left:4px;top:744px;width:693px;height:1px;background:repeating-linear-gradient(to right,rgba(255,255,255,0.7) 0 2px,transparent 2px 3px)"></div>
<div class="a" style="left:47px;top:737px;width:8px;height:1px;background:repeating-linear-gradient(to right,#c8c8c8 0 1px,transparent 1px 2px)"></div>
<div class="t m" style="left:57.5px;top:729px;line-height:15px;height:15px;color:#139a13;font-size:9.2px">060394E7</div>
<div class="t" style="left:305.8px;top:729.0px;line-height:15px;height:15px;color:#159415;letter-spacing:-0.47px">DLC04_LCharCaveCricketLegendary</div>
<div class="a" style="left:4px;top:745px;width:693px;height:15px;background:#ffffd9"></div>
<div class="a" style="left:4px;top:759px;width:693px;height:1px;background:repeating-linear-gradient(to right,rgba(255,255,255,0.7) 0 2px,transparent 2px 3px)"></div>
<div class="a" style="left:47px;top:752px;width:8px;height:1px;background:repeating-linear-gradient(to right,#c8c8c8 0 1px,transparent 1px 2px)"></div>
<div class="t m" style="left:57.5px;top:744px;line-height:15px;height:15px;color:#139a13;font-size:9.2px">0603E3A5</div>
<div class="t" style="left:305.8px;top:744.0px;line-height:15px;height:15px;color:#159415;letter-spacing:-0.47px">DLC04_LCharRadAntAmbushLegendary</div>
<div class="a" style="left:4px;top:760px;width:693px;height:15px;background:#ffffd9"></div>
<div class="a" style="left:4px;top:774px;width:693px;height:1px;background:repeating-linear-gradient(to right,rgba(255,255,255,0.7) 0 2px,transparent 2px 3px)"></div>
<div class="a" style="left:47px;top:767px;width:8px;height:1px;background:repeating-linear-gradient(to right,#c8c8c8 0 1px,transparent 1px 2px)"></div>
<div class="t m" style="left:57.5px;top:759px;line-height:15px;height:15px;color:#139a13;font-size:9.2px">0603E3A6</div>
<div class="t" style="left:305.8px;top:759.0px;line-height:15px;height:15px;color:#159415;letter-spacing:-0.47px">DLC04_LCharRadAntLegendary</div>
<div class="a" style="left:4px;top:775px;width:693px;height:15px;background:#ffffd9"></div>
<div class="a" style="left:4px;top:789px;width:693px;height:1px;background:repeating-linear-gradient(to right,rgba(255,255,255,0.7) 0 2px,transparent 2px 3px)"></div>
<div class="a" style="left:47px;top:782px;width:8px;height:1px;background:repeating-linear-gradient(to right,#c8c8c8 0 1px,transparent 1px 2px)"></div>
<div class="t m" style="left:57.5px;top:774px;line-height:15px;height:15px;color:#139a13;font-size:9.2px">0603E630</div>
<div class="t" style="left:305.8px;top:774.0px;line-height:15px;height:15px;color:#159415;letter-spacing:-0.47px">DLC04LCharTurretBubble_RedLaserOnly</div>
<div class="a" style="left:4px;top:790px;width:693px;height:15px;background:#ffffd9"></div>
<div class="a" style="left:4px;top:804px;width:693px;height:1px;background:repeating-linear-gradient(to right,rgba(255,255,255,0.7) 0 2px,transparent 2px 3px)"></div>
<div class="a" style="left:47px;top:797px;width:8px;height:1px;background:repeating-linear-gradient(to right,#c8c8c8 0 1px,transparent 1px 2px)"></div>
<div class="t m" style="left:57.5px;top:789px;line-height:15px;height:15px;color:#139a13;font-size:9.2px">0603F93F</div>
<div class="t" style="left:305.8px;top:789.0px;line-height:15px;height:15px;color:#159415;letter-spacing:-0.47px">DLC04_LCharSwarmAmbushLegendary</div>
<div class="a" style="left:4px;top:805px;width:693px;height:15px;background:#ffffd9"></div>
<div class="a" style="left:4px;top:819px;width:693px;height:1px;background:repeating-linear-gradient(to right,rgba(255,255,255,0.7) 0 2px,transparent 2px 3px)"></div>
<div class="a" style="left:47px;top:812px;width:8px;height:1px;background:repeating-linear-gradient(to right,#c8c8c8 0 1px,transparent 1px 2px)"></div>
<div class="t m" style="left:57.5px;top:804px;line-height:15px;height:15px;color:#139a13;font-size:9.2px">0603F940</div>
<div class="t" style="left:305.8px;top:804.0px;line-height:15px;height:15px;color:#159415;letter-spacing:-0.47px">DLC04_LCharSwarmLegendary</div>
<div class="a" style="left:4px;top:820px;width:693px;height:15px;background:#d4ffd4"></div>
<div class="a" style="left:4px;top:834px;width:693px;height:1px;background:repeating-linear-gradient(to right,rgba(255,255,255,0.7) 0 2px,transparent 2px 3px)"></div>
<div class="a" style="left:47px;top:827px;width:8px;height:1px;background:repeating-linear-gradient(to right,#c8c8c8 0 1px,transparent 1px 2px)"></div>
<div class="t m" style="left:57.5px;top:819px;line-height:15px;height:15px;color:#8a8a8a;font-size:9.2px">060418CB</div>
<div class="t" style="left:305.8px;top:819.0px;line-height:15px;height:15px;color:#808080;letter-spacing:-0.47px">DLC04_LCharRaiderDiscipleFaceM</div>
<div class="a" style="left:4px;top:835px;width:693px;height:15px;background:#d4ffd4"></div>
<div class="a" style="left:4px;top:849px;width:693px;height:1px;background:repeating-linear-gradient(to right,rgba(255,255,255,0.7) 0 2px,transparent 2px 3px)"></div>
<div class="a" style="left:47px;top:842px;width:8px;height:1px;background:repeating-linear-gradient(to right,#c8c8c8 0 1px,transparent 1px 2px)"></div>
<div class="t m" style="left:57.5px;top:834px;line-height:15px;height:15px;color:#8a8a8a;font-size:9.2px">060418CC</div>
<div class="t" style="left:305.8px;top:834.0px;line-height:15px;height:15px;color:#808080;letter-spacing:-0.47px">DLC04_LCharRaiderDiscipleFaceF</div>
<div class="a" style="left:4px;top:850px;width:693px;height:15px;background:#ffffd9"></div>
<div class="a" style="left:4px;top:864px;width:693px;height:1px;background:repeating-linear-gradient(to right,rgba(255,255,255,0.7) 0 2px,transparent 2px 3px)"></div>
<div class="a" style="left:47px;top:857px;width:8px;height:1px;background:repeating-linear-gradient(to right,#c8c8c8 0 1px,transparent 1px 2px)"></div>
<div class="t m" style="left:57.5px;top:849px;line-height:15px;height:15px;color:#139a13;font-size:9.2px">06044963</div>
<div class="t" style="left:305.8px;top:849.0px;line-height:15px;height:15px;color:#159415;letter-spacing:-0.47px">DLC04_LCharSinnersGang</div>
<div class="a" style="left:4px;top:865px;width:693px;height:15px;background:#ffffd9"></div>
<div class="a" style="left:4px;top:879px;width:693px;height:1px;background:repeating-linear-gradient(to right,rgba(255,255,255,0.7) 0 2px,transparent 2px 3px)"></div>
<div class="a" style="left:47px;top:872px;width:8px;height:1px;background:repeating-linear-gradient(to right,#c8c8c8 0 1px,transparent 1px 2px)"></div>
<div class="t m" style="left:57.5px;top:864px;line-height:15px;height:15px;color:#139a13;font-size:9.2px">06044964</div>
<div class="t" style="left:305.8px;top:864.0px;line-height:15px;height:15px;color:#159415;letter-spacing:-0.47px">DLC04_LCharGangBoss</div>
<div class="a" style="left:4px;top:880px;width:693px;height:15px;background:#ffffd9"></div>
<div class="a" style="left:4px;top:894px;width:693px;height:1px;background:repeating-linear-gradient(to right,rgba(255,255,255,0.7) 0 2px,transparent 2px 3px)"></div>
<div class="a" style="left:47px;top:887px;width:8px;height:1px;background:repeating-linear-gradient(to right,#c8c8c8 0 1px,transparent 1px 2px)"></div>
<div class="t m" style="left:57.5px;top:879px;line-height:15px;height:15px;color:#139a13;font-size:9.2px">06046F90</div>
<div class="t" style="left:305.8px;top:879.0px;line-height:15px;height:15px;color:#159415;letter-spacing:-0.47px">DLC04_LCharRadRatLegendary</div>
<div class="a" style="left:4px;top:895px;width:693px;height:15px;background:#d4ffd4"></div>
<div class="a" style="left:4px;top:909px;width:693px;height:1px;background:repeating-linear-gradient(to right,rgba(255,255,255,0.7) 0 2px,transparent 2px 3px)"></div>
<div class="a" style="left:47px;top:902px;width:8px;height:1px;background:repeating-linear-gradient(to right,#c8c8c8 0 1px,transparent 1px 2px)"></div>
<div class="t m" style="left:57.5px;top:894px;line-height:15px;height:15px;color:#8a8a8a;font-size:9.2px">0604A697</div>
<div class="t" style="left:305.8px;top:894.0px;line-height:15px;height:15px;color:#808080;letter-spacing:-0.47px">DLC04_LCharRaiderPackFace_Male</div>
<div class="a" style="left:4px;top:910px;width:693px;height:15px;background:#ffffd9"></div>
<div class="a" style="left:4px;top:924px;width:693px;height:1px;background:repeating-linear-gradient(to right,rgba(255,255,255,0.7) 0 2px,transparent 2px 3px)"></div>
<div class="a" style="left:47px;top:917px;width:8px;height:1px;background:repeating-linear-gradient(to right,#c8c8c8 0 1px,transparent 1px 2px)"></div>
<div class="t m" style="left:57.5px;top:909px;line-height:15px;height:15px;color:#139a13;font-size:9.2px">06048C86</div>
<div class="t" style="left:305.8px;top:909.0px;line-height:15px;height:15px;color:#159415;letter-spacing:-0.47px">DLC04LCharTurretBubble</div>
<div class="a" style="left:4px;top:925px;width:693px;height:15px;background:#ffffd9"></div>
<div class="a" style="left:4px;top:939px;width:693px;height:1px;background:repeating-linear-gradient(to right,rgba(255,255,255,0.7) 0 2px,transparent 2px 3px)"></div>
<div class="a" style="left:47px;top:932px;width:8px;height:1px;background:repeating-linear-gradient(to right,#c8c8c8 0 1px,transparent 1px 2px)"></div>
<div class="t m" style="left:57.5px;top:924px;line-height:15px;height:15px;color:#139a13;font-size:9.2px">06056F4F</div>
<div class="t" style="left:305.8px;top:924.0px;line-height:15px;height:15px;color:#159415;letter-spacing:-0.47px">DLC04_LCharGangDiscipleLegendary</div>
<div class="a" style="left:4px;top:940px;width:693px;height:15px;background:#ffffd9"></div>
<div class="a" style="left:4px;top:954px;width:693px;height:1px;background:repeating-linear-gradient(to right,rgba(255,255,255,0.7) 0 2px,transparent 2px 3px)"></div>
<div class="a" style="left:47px;top:947px;width:8px;height:1px;background:repeating-linear-gradient(to right,#c8c8c8 0 1px,transparent 1px 2px)"></div>
<div class="t m" style="left:57.5px;top:939px;line-height:15px;height:15px;color:#139a13;font-size:9.2px">06056F50</div>
<div class="t" style="left:305.8px;top:939.0px;line-height:15px;height:15px;color:#159415;letter-spacing:-0.47px">DLC04_LCharGangOperatorLegendary</div>
<div class="a" style="left:4px;top:955px;width:693px;height:15px;background:#ffffd9"></div>
<div class="a" style="left:4px;top:969px;width:693px;height:1px;background:repeating-linear-gradient(to right,rgba(255,255,255,0.7) 0 2px,transparent 2px 3px)"></div>
<div class="a" style="left:47px;top:962px;width:8px;height:1px;background:repeating-linear-gradient(to right,#c8c8c8 0 1px,transparent 1px 2px)"></div>
<div class="t m" style="left:57.5px;top:954px;line-height:15px;height:15px;color:#139a13;font-size:9.2px">06056F51</div>
<div class="t" style="left:305.8px;top:954.0px;line-height:15px;height:15px;color:#159415;letter-spacing:-0.47px">DLC04_LCharGangPackLegendary</div>
<div class="a" style="left:4px;top:970px;width:693px;height:15px;background:#ffffd9"></div>
<div class="a" style="left:4px;top:984px;width:693px;height:1px;background:repeating-linear-gradient(to right,rgba(255,255,255,0.7) 0 2px,transparent 2px 3px)"></div>
<div class="a" style="left:47px;top:977px;width:8px;height:1px;background:repeating-linear-gradient(to right,#c8c8c8 0 1px,transparent 1px 2px)"></div>
<div class="t m" style="left:57.5px;top:969px;line-height:15px;height:15px;color:#139a13;font-size:9.2px">AB12466D</div>
<div class="t" style="left:305.8px;top:969.0px;line-height:15px;height:15px;color:#159415;letter-spacing:-0.47px">LCharLVL_Wolf</div>
<div class="a" style="left:4px;top:985px;width:693px;height:15px;background:#ffffd9"></div>
<div class="a" style="left:4px;top:999px;width:693px;height:1px;background:repeating-linear-gradient(to right,rgba(255,255,255,0.7) 0 2px,transparent 2px 3px)"></div>
<div class="a" style="left:47px;top:992px;width:8px;height:1px;background:repeating-linear-gradient(to right,#c8c8c8 0 1px,transparent 1px 2px)"></div>
<div class="t m" style="left:57.5px;top:984px;line-height:15px;height:15px;color:#139a13;font-size:9.2px">AB124670</div>
<div class="t" style="left:305.8px;top:984.0px;line-height:15px;height:15px;color:#159415;letter-spacing:-0.47px">LCharLVL_Ant</div>
<div class="a" style="left:296px;top:85px;width:1px;height:915px;background:rgba(255,255,255,0.5)"></div>
<div class="a" style="left:15px;top:85px;width:1px;height:915px;background:repeating-linear-gradient(to bottom,#b0b0b0 0 1px,transparent 1px 2px)"></div>
<div class="a" style="left:30px;top:85px;width:1px;height:915px;background:repeating-linear-gradient(to bottom,#b0b0b0 0 1px,transparent 1px 2px)"></div>
<div class="a" style="left:45px;top:85px;width:1px;height:915px;background:repeating-linear-gradient(to bottom,#b0b0b0 0 1px,transparent 1px 2px)"></div>
<div class="a" style="left:697px;top:85px;width:13px;height:918px;background:#f0f0f0"></div>
<svg class="a" style="left:699px;top:88px" width="8" height="6" viewBox="0 0 8 6"><path d="M1 4.8L4 1.8L7 4.8" fill="none" stroke="#505050" stroke-width="1.6"/></svg>
<svg class="a" style="left:699px;top:993px" width="8" height="6" viewBox="0 0 8 6"><path d="M1 1.2L4 4.2L7 1.2" fill="none" stroke="#505050" stroke-width="1.6"/></svg>
<div class="a" style="left:698px;top:589px;width:11px;height:114px;background:#cdcdcd"></div>
<div class="t" style="left:12px;top:1010.5px;line-height:15px;height:15px;letter-spacing:-0.45px">F<u>i</u>lter by filename:</div>
<div class="a" style="left:85px;top:1010px;width:625px;height:17px;background:#fff;border:1px solid #a8a8a8;border-right-color:#c4c4c4;border-bottom-color:#b8b8b8"></div>
<div class="a" style="left:713px;top:45px;width:1204px;height:982px;background:#fff;border-top:1px solid #a0a0a0;border-left:1px solid #a0a0a0;border-right:1px solid #fff;border-bottom:1px solid #e3e3e3;box-shadow:inset 1px 1px 0 #696969,inset -1px 0 0 #e3e3e3"></div>
<div class="t" style="left:720px;top:53.5px;line-height:15px;height:15px;">Filter by <u>N</u>ame:</div>
<div class="a" style="left:784px;top:52px;width:103px;height:17px;background:#fff;border:1px solid #a8a8a8;border-right-color:#c4c4c4;border-bottom-color:#b8b8b8"></div>
<div class="a" style="left:891px;top:52px;width:44px;height:17px;background:#e1e1e1;border:1px solid #adadad"></div>
<div class="t" style="left:894px;top:53.0px;line-height:15px;height:15px;font-size:10px">and</div>
<svg class="a" style="left:924px;top:58px" width="8" height="5" viewBox="0 0 8 5"><path d="M0.5 0.5L4 4L7.5 0.5" fill="none" stroke="#505050" stroke-width="1"/></svg>
<div class="t" style="left:939.5px;top:53.5px;line-height:15px;height:15px;">by <u>V</u>alue:</div>
<div class="a" style="left:979px;top:52px;width:103px;height:17px;background:#fff;border:1px solid #a8a8a8;border-right-color:#c4c4c4;border-bottom-color:#b8b8b8"></div>
<div class="t" style="left:1089px;top:53.5px;line-height:15px;height:15px;">Keep</div>
<div class="a" style="left:1113px;top:55px;width:10px;height:10px;background:#fff;border:1px solid #333"></div>
<div class="t" style="left:1125.5px;top:53.0px;line-height:15px;height:15px;letter-spacing:-0.25px">children</div>
<div class="a" style="left:1163px;top:55px;width:10px;height:10px;background:#fff;border:1px solid #333"></div>
<div class="t" style="left:1175.5px;top:53.0px;line-height:15px;height:15px;letter-spacing:-0.25px">siblings</div>
<div class="a" style="left:1212px;top:55px;width:10px;height:10px;background:#fff;border:1px solid #333"></div>
<div class="t" style="left:1224.5px;top:53.0px;line-height:15px;height:15px;letter-spacing:-0.36px">parent's siblings</div>
<div class="t" style="left:1871.5px;top:54.0px;line-height:15px;height:15px;">Legend</div>
<div class="a" style="left:718px;top:78px;width:1195px;height:928px;border-top:1px solid #696969;border-left:1px solid #a0a0a0;background:#fff"></div>
<div class="t" style="left:873px;top:80.0px;line-height:15px;height:15px;color:#880c88;letter-spacing:-0.42px">[06] DLCNukaWorld.esm</div>
<div class="t" style="left:1023px;top:80.0px;line-height:15px;height:15px;color:#159415">[AC] Z_Horizon_DLC_All.esp</div>
<div class="a" style="left:868px;top:79px;width:1px;height:17px;background:#e5e5e5"></div>
<div class="a" style="left:1018px;top:79px;width:1px;height:17px;background:#e5e5e5"></div>
<div class="a" style="left:1168px;top:79px;width:1px;height:17px;background:#e5e5e5"></div>
<div class="a" style="left:1899px;top:79px;width:1px;height:17px;background:#e5e5e5"></div>
<div class="a" style="left:719px;top:96px;width:1181px;height:910px;overflow:hidden">
<div class="a" style="left:0px;top:0px;width:149px;height:15px;background:#d0ffd0"></div>
<div class="a" style="left:149px;top:0px;width:150px;height:15px;background:#d0ffd0"></div>
<div class="a" style="left:299px;top:0px;width:150px;height:15px;background:#d0ffd0"></div>
<div class="a" style="left:449px;top:0px;width:732px;height:15px;background:#d0ffd0"></div>
<div class="a" style="left:0;top:14px;width:1181px;height:1px;background:repeating-linear-gradient(to right,rgba(255,255,255,0.75) 0 2px,transparent 2px 3px)"></div>
<div class="t" style="left:23.5px;top:-0.5px;line-height:15px;height:15px;color:#880c88">Record Header</div>
<div class="a" style="left:0px;top:15px;width:149px;height:15px;background:#d0ffd0"></div>
<div class="a" style="left:149px;top:15px;width:150px;height:15px;background:#d0ffd0"></div>
<div class="a" style="left:299px;top:15px;width:150px;height:15px;background:#d0ffd0"></div>
<div class="a" style="left:449px;top:15px;width:732px;height:15px;background:#d0ffd0"></div>
<div class="a" style="left:0;top:29px;width:1181px;height:1px;background:repeating-linear-gradient(to right,rgba(255,255,255,0.75) 0 2px,transparent 2px 3px)"></div>
<div class="t" style="left:38.5px;top:14.5px;line-height:15px;height:15px;color:#880c88">Signature</div>
<div class="t" style="left:158.5px;top:14.5px;line-height:15px;height:15px;color:#880c88">LVLN</div>
<div class="t" style="left:308.5px;top:14.5px;line-height:15px;height:15px;color:#808080">LVLN</div>
<div class="a" style="left:0px;top:30px;width:149px;height:15px;background:#d0ffd0"></div>
<div class="a" style="left:149px;top:30px;width:150px;height:15px;background:#d0ffd0"></div>
<div class="a" style="left:299px;top:30px;width:150px;height:15px;background:#d0ffd0"></div>
<div class="a" style="left:449px;top:30px;width:732px;height:15px;background:#d0ffd0"></div>
<div class="a" style="left:0;top:44px;width:1181px;height:1px;background:repeating-linear-gradient(to right,rgba(255,255,255,0.75) 0 2px,transparent 2px 3px)"></div>
<div class="t" style="left:38.5px;top:29.5px;line-height:15px;height:15px;color:#000">Data Size</div>
<div class="t" style="left:158.5px;top:29.5px;line-height:15px;height:15px;color:#000">183</div>
<div class="t" style="left:308.5px;top:29.5px;line-height:15px;height:15px;color:#000">435</div>
<div class="a" style="left:0px;top:45px;width:149px;height:15px;background:#d0ffd0"></div>
<div class="a" style="left:149px;top:45px;width:150px;height:15px;background:#d0ffd0"></div>
<div class="a" style="left:299px;top:45px;width:150px;height:15px;background:#d0ffd0"></div>
<div class="a" style="left:449px;top:45px;width:732px;height:15px;background:#d0ffd0"></div>
<div class="a" style="left:0;top:59px;width:1181px;height:1px;background:repeating-linear-gradient(to right,rgba(255,255,255,0.75) 0 2px,transparent 2px 3px)"></div>
<div class="t" style="left:38.5px;top:44.5px;line-height:15px;height:15px;color:#880c88">Record Flags</div>
<div class="a" style="left:0px;top:60px;width:149px;height:15px;background:#d0ffd0"></div>
<div class="a" style="left:149px;top:60px;width:150px;height:15px;background:#d0ffd0"></div>
<div class="a" style="left:299px;top:60px;width:150px;height:15px;background:#d0ffd0"></div>
<div class="a" style="left:449px;top:60px;width:732px;height:15px;background:#d0ffd0"></div>
<div class="a" style="left:0;top:74px;width:1181px;height:1px;background:repeating-linear-gradient(to right,rgba(255,255,255,0.75) 0 2px,transparent 2px 3px)"></div>
<div class="t" style="left:38.5px;top:59.5px;line-height:15px;height:15px;color:#880c88">FormID</div>
<div class="t" style="left:158.5px;top:59.5px;line-height:15px;height:15px;color:#880c88">DLC04_LCharCaveCricket [LVLN:...</div>
<div class="t" style="left:308.5px;top:59.5px;line-height:15px;height:15px;color:#808080">DLC04_LCharCaveCricket [LVLN:...</div>
<div class="a" style="left:0px;top:75px;width:149px;height:15px;background:#d0ffd0"></div>
<div class="a" style="left:149px;top:75px;width:150px;height:15px;background:#d0ffd0"></div>
<div class="a" style="left:299px;top:75px;width:150px;height:15px;background:#d0ffd0"></div>
<div class="a" style="left:449px;top:75px;width:732px;height:15px;background:#d0ffd0"></div>
<div class="a" style="left:0;top:89px;width:1181px;height:1px;background:repeating-linear-gradient(to right,rgba(255,255,255,0.75) 0 2px,transparent 2px 3px)"></div>
<div class="t" style="left:38.5px;top:74.5px;line-height:15px;height:15px;color:#000">Version Control Info 1</div>
<div class="t" style="left:158.5px;top:74.5px;line-height:15px;height:15px;color:#000"><span style="letter-spacing:-0.78px">2016-06-08 User: 172 Index: 0</span></div>
<div class="t" style="left:308.5px;top:74.5px;line-height:15px;height:15px;color:#000">None</div>
<div class="a" style="left:0px;top:90px;width:149px;height:15px;background:#d0ffd0"></div>
<div class="a" style="left:149px;top:90px;width:150px;height:15px;background:#d0ffd0"></div>
<div class="a" style="left:299px;top:90px;width:150px;height:15px;background:#d0ffd0"></div>
<div class="a" style="left:449px;top:90px;width:732px;height:15px;background:#d0ffd0"></div>
<div class="a" style="left:0;top:104px;width:1181px;height:1px;background:repeating-linear-gradient(to right,rgba(255,255,255,0.75) 0 2px,transparent 2px 3px)"></div>
<div class="t" style="left:38.5px;top:89.5px;line-height:15px;height:15px;color:#000">Form Version</div>
<div class="t" style="left:158.5px;top:89.5px;line-height:15px;height:15px;color:#000">131</div>
<div class="t" style="left:308.5px;top:89.5px;line-height:15px;height:15px;color:#000">131</div>
<div class="a" style="left:0px;top:105px;width:149px;height:15px;background:#d0ffd0"></div>
<div class="a" style="left:149px;top:105px;width:150px;height:15px;background:#d0ffd0"></div>
<div class="a" style="left:299px;top:105px;width:150px;height:15px;background:#d0ffd0"></div>
<div class="a" style="left:449px;top:105px;width:732px;height:15px;background:#d0ffd0"></div>
<div class="a" style="left:0;top:119px;width:1181px;height:1px;background:repeating-linear-gradient(to right,#a8a8a8 0 2px,transparent 2px 3px)"></div>
<div class="t" style="left:38.5px;top:104.5px;line-height:15px;height:15px;color:#000">Version Control Info 2</div>
<div class="t" style="left:158.5px;top:104.5px;line-height:15px;height:15px;color:#000"><span style="word-spacing:0">02 00</span></div>
<div class="t" style="left:308.5px;top:104.5px;line-height:15px;height:15px;color:#000"><span style="word-spacing:0">00 00</span></div>
<div class="a" style="left:0px;top:120px;width:149px;height:15px;background:#d0ffd0"></div>
<div class="a" style="left:149px;top:120px;width:150px;height:15px;background:#d0ffd0"></div>
<div class="a" style="left:299px;top:120px;width:150px;height:15px;background:#d0ffd0"></div>
<div class="a" style="left:449px;top:120px;width:732px;height:15px;background:#d0ffd0"></div>
<div class="a" style="left:0;top:134px;width:1181px;height:1px;background:repeating-linear-gradient(to right,#a8a8a8 0 2px,transparent 2px 3px)"></div>
<div class="t" style="left:23.5px;top:119.5px;line-height:15px;height:15px;color:#880c88">EDID<span style="word-spacing:0.3px"> - </span>Editor ID</div>
<div class="t" style="left:158.5px;top:119.5px;line-height:15px;height:15px;color:#880c88">DLC04_LCharCaveCricket</div>
<div class="t" style="left:308.5px;top:119.5px;line-height:15px;height:15px;color:#808080">DLC04_LCharCaveCricket</div>
<div class="a" style="left:0px;top:135px;width:149px;height:15px;background:#d0ffd0"></div>
<div class="a" style="left:149px;top:135px;width:150px;height:15px;background:#d0ffd0"></div>
<div class="a" style="left:299px;top:135px;width:150px;height:15px;background:#d0ffd0"></div>
<div class="a" style="left:449px;top:135px;width:732px;height:15px;background:#d0ffd0"></div>
<div class="a" style="left:0;top:149px;width:1181px;height:1px;background:repeating-linear-gradient(to right,rgba(255,255,255,0.75) 0 2px,transparent 2px 3px)"></div>
<div class="t" style="left:23.5px;top:134.5px;line-height:15px;height:15px;color:#880c88">OBND<span style="word-spacing:0.3px"> - </span>Object Bounds</div>
<div class="a" style="left:0px;top:150px;width:149px;height:15px;background:#d0ffd0"></div>
<div class="a" style="left:149px;top:150px;width:150px;height:15px;background:#d0ffd0"></div>
<div class="a" style="left:299px;top:150px;width:150px;height:15px;background:#d0ffd0"></div>
<div class="a" style="left:449px;top:150px;width:732px;height:15px;background:#d0ffd0"></div>
<div class="a" style="left:0;top:164px;width:1181px;height:1px;background:repeating-linear-gradient(to right,rgba(255,255,255,0.75) 0 2px,transparent 2px 3px)"></div>
<div class="t" style="left:38.5px;top:149.5px;line-height:15px;height:15px;color:#880c88">X1</div>
<div class="t" style="left:158.5px;top:149.5px;line-height:15px;height:15px;color:#880c88">0</div>
<div class="t" style="left:308.5px;top:149.5px;line-height:15px;height:15px;color:#808080">0</div>
<div class="a" style="left:0px;top:165px;width:149px;height:15px;background:#d0ffd0"></div>
<div class="a" style="left:149px;top:165px;width:150px;height:15px;background:#d0ffd0"></div>
<div class="a" style="left:299px;top:165px;width:150px;height:15px;background:#d0ffd0"></div>
<div class="a" style="left:449px;top:165px;width:732px;height:15px;background:#d0ffd0"></div>
<div class="a" style="left:0;top:179px;width:1181px;height:1px;background:repeating-linear-gradient(to right,rgba(255,255,255,0.75) 0 2px,transparent 2px 3px)"></div>
<div class="t" style="left:38.5px;top:164.5px;line-height:15px;height:15px;color:#880c88">Y1</div>
<div class="t" style="left:158.5px;top:164.5px;line-height:15px;height:15px;color:#880c88">0</div>
<div class="t" style="left:308.5px;top:164.5px;line-height:15px;height:15px;color:#808080">0</div>
<div class="a" style="left:0px;top:180px;width:149px;height:15px;background:#d0ffd0"></div>
<div class="a" style="left:149px;top:180px;width:150px;height:15px;background:#d0ffd0"></div>
<div class="a" style="left:299px;top:180px;width:150px;height:15px;background:#d0ffd0"></div>
<div class="a" style="left:449px;top:180px;width:732px;height:15px;background:#d0ffd0"></div>
<div class="a" style="left:0;top:194px;width:1181px;height:1px;background:repeating-linear-gradient(to right,rgba(255,255,255,0.75) 0 2px,transparent 2px 3px)"></div>
<div class="t" style="left:38.5px;top:179.5px;line-height:15px;height:15px;color:#880c88">Z1</div>
<div class="t" style="left:158.5px;top:179.5px;line-height:15px;height:15px;color:#880c88">0</div>
<div class="t" style="left:308.5px;top:179.5px;line-height:15px;height:15px;color:#808080">0</div>
<div class="a" style="left:0px;top:195px;width:149px;height:15px;background:#d0ffd0"></div>
<div class="a" style="left:149px;top:195px;width:150px;height:15px;background:#d0ffd0"></div>
<div class="a" style="left:299px;top:195px;width:150px;height:15px;background:#d0ffd0"></div>
<div class="a" style="left:449px;top:195px;width:732px;height:15px;background:#d0ffd0"></div>
<div class="a" style="left:0;top:209px;width:1181px;height:1px;background:repeating-linear-gradient(to right,rgba(255,255,255,0.75) 0 2px,transparent 2px 3px)"></div>
<div class="t" style="left:38.5px;top:194.5px;line-height:15px;height:15px;color:#880c88">X2</div>
<div class="t" style="left:158.5px;top:194.5px;line-height:15px;height:15px;color:#880c88">0</div>
<div class="t" style="left:308.5px;top:194.5px;line-height:15px;height:15px;color:#808080">0</div>
<div class="a" style="left:0px;top:210px;width:149px;height:15px;background:#d0ffd0"></div>
<div class="a" style="left:149px;top:210px;width:150px;height:15px;background:#d0ffd0"></div>
<div class="a" style="left:299px;top:210px;width:150px;height:15px;background:#d0ffd0"></div>
<div class="a" style="left:449px;top:210px;width:732px;height:15px;background:#d0ffd0"></div>
<div class="a" style="left:0;top:224px;width:1181px;height:1px;background:repeating-linear-gradient(to right,rgba(255,255,255,0.75) 0 2px,transparent 2px 3px)"></div>
<div class="t" style="left:38.5px;top:209.5px;line-height:15px;height:15px;color:#880c88">Y2</div>
<div class="t" style="left:158.5px;top:209.5px;line-height:15px;height:15px;color:#880c88">0</div>
<div class="t" style="left:308.5px;top:209.5px;line-height:15px;height:15px;color:#808080">0</div>
<div class="a" style="left:0px;top:225px;width:149px;height:15px;background:#d0ffd0"></div>
<div class="a" style="left:149px;top:225px;width:150px;height:15px;background:#d0ffd0"></div>
<div class="a" style="left:299px;top:225px;width:150px;height:15px;background:#d0ffd0"></div>
<div class="a" style="left:449px;top:225px;width:732px;height:15px;background:#d0ffd0"></div>
<div class="a" style="left:0;top:239px;width:1181px;height:1px;background:repeating-linear-gradient(to right,#a8a8a8 0 2px,transparent 2px 3px)"></div>
<div class="t" style="left:38.5px;top:224.5px;line-height:15px;height:15px;color:#880c88">Z2</div>
<div class="t" style="left:158.5px;top:224.5px;line-height:15px;height:15px;color:#880c88">0</div>
<div class="t" style="left:308.5px;top:224.5px;line-height:15px;height:15px;color:#808080">0</div>
<div class="a" style="left:0px;top:240px;width:149px;height:15px;background:#d0ffd0"></div>
<div class="a" style="left:149px;top:240px;width:150px;height:15px;background:#d0ffd0"></div>
<div class="a" style="left:299px;top:240px;width:150px;height:15px;background:#d0ffd0"></div>
<div class="a" style="left:449px;top:240px;width:732px;height:15px;background:#d0ffd0"></div>
<div class="a" style="left:0;top:254px;width:1181px;height:1px;background:repeating-linear-gradient(to right,#a8a8a8 0 2px,transparent 2px 3px)"></div>
<div class="t" style="left:23.5px;top:239.5px;line-height:15px;height:15px;color:#880c88">LVLD<span style="word-spacing:0.3px"> - </span>Chance None</div>
<div class="t" style="left:158.5px;top:239.5px;line-height:15px;height:15px;color:#880c88">0</div>
<div class="t" style="left:308.5px;top:239.5px;line-height:15px;height:15px;color:#808080">0</div>
<div class="a" style="left:0px;top:255px;width:149px;height:15px;background:#d0ffd0"></div>
<div class="a" style="left:149px;top:255px;width:150px;height:15px;background:#d0ffd0"></div>
<div class="a" style="left:299px;top:255px;width:150px;height:15px;background:#d0ffd0"></div>
<div class="a" style="left:449px;top:255px;width:732px;height:15px;background:#d0ffd0"></div>
<div class="a" style="left:0;top:269px;width:1181px;height:1px;background:repeating-linear-gradient(to right,#a8a8a8 0 2px,transparent 2px 3px)"></div>
<div class="t" style="left:23.5px;top:254.5px;line-height:15px;height:15px;color:#880c88">LVLM<span style="word-spacing:0.3px"> - </span>Max Count</div>
<div class="t" style="left:158.5px;top:254.5px;line-height:15px;height:15px;color:#880c88">0</div>
<div class="t" style="left:308.5px;top:254.5px;line-height:15px;height:15px;color:#808080">0</div>
<div class="a" style="left:0px;top:270px;width:149px;height:15px;background:#d0ffd0"></div>
<div class="a" style="left:149px;top:270px;width:150px;height:15px;background:#d0ffd0"></div>
<div class="a" style="left:299px;top:270px;width:150px;height:15px;background:#d0ffd0"></div>
<div class="a" style="left:449px;top:270px;width:732px;height:15px;background:#d0ffd0"></div>
<div class="a" style="left:0;top:284px;width:1181px;height:1px;background:repeating-linear-gradient(to right,rgba(255,255,255,0.75) 0 2px,transparent 2px 3px)"></div>
<div class="t" style="left:23.5px;top:269.5px;line-height:15px;height:15px;color:#880c88">LVLF<span style="word-spacing:0.3px"> - </span>Flags (sorted)</div>
<div class="t" style="left:158.5px;top:269.5px;line-height:15px;height:15px;color:#880c88;letter-spacing:-0.45px">Calculate from all levels &lt;= play...</div>
<div class="t" style="left:308.5px;top:269.5px;line-height:15px;height:15px;color:#808080;letter-spacing:-0.45px">Calculate from all levels &lt;= play...</div>
<div class="a" style="left:0px;top:285px;width:149px;height:15px;background:#d0ffd0"></div>
<div class="a" style="left:149px;top:285px;width:150px;height:15px;background:#d0ffd0"></div>
<div class="a" style="left:299px;top:285px;width:150px;height:15px;background:#d0ffd0"></div>
<div class="a" style="left:449px;top:285px;width:732px;height:15px;background:#d0ffd0"></div>
<div class="a" style="left:0;top:299px;width:1181px;height:1px;background:repeating-linear-gradient(to right,rgba(255,255,255,0.75) 0 2px,transparent 2px 3px)"></div>
<div class="t" style="left:38.5px;top:284.5px;line-height:15px;height:15px;color:#880c88">Calculate from all levels ...</div>
<div class="t" style="left:158.5px;top:284.5px;line-height:15px;height:15px;color:#880c88;letter-spacing:-0.45px">Calculate from all levels &lt;= play...</div>
<div class="t" style="left:308.5px;top:284.5px;line-height:15px;height:15px;color:#808080;letter-spacing:-0.45px">Calculate from all levels &lt;= play...</div>
<div class="a" style="left:0px;top:300px;width:149px;height:15px;background:#d0ffd0"></div>
<div class="a" style="left:149px;top:300px;width:150px;height:15px;background:#d0ffd0"></div>
<div class="a" style="left:299px;top:300px;width:150px;height:15px;background:#d0ffd0"></div>
<div class="a" style="left:449px;top:300px;width:732px;height:15px;background:#d0ffd0"></div>
<div class="a" style="left:0;top:314px;width:1181px;height:1px;background:repeating-linear-gradient(to right,#a8a8a8 0 2px,transparent 2px 3px)"></div>
<div class="t" style="left:38.5px;top:299.5px;line-height:15px;height:15px;color:#880c88">Calculate for each item i...</div>
<div class="t" style="left:158.5px;top:299.5px;line-height:15px;height:15px;color:#880c88;letter-spacing:-0.45px">Calculate for each item in count</div>
<div class="t" style="left:308.5px;top:299.5px;line-height:15px;height:15px;color:#808080;letter-spacing:-0.45px">Calculate for each item in count</div>
<div class="a" style="left:0px;top:315px;width:149px;height:15px;background:#d0ffd0"></div>
<div class="a" style="left:149px;top:315px;width:150px;height:15px;background:#e6ffe6"></div>
<div class="a" style="left:299px;top:315px;width:150px;height:15px;background:#e6ffe6"></div>
<div class="a" style="left:449px;top:315px;width:732px;height:15px;background:#e6ffe6"></div>
<div class="a" style="left:0;top:329px;width:1181px;height:1px;background:repeating-linear-gradient(to right,#a8a8a8 0 2px,transparent 2px 3px)"></div>
<div class="t" style="left:23.5px;top:314.5px;line-height:15px;height:15px;color:#808080">LVLG<span style="word-spacing:0.3px"> - </span>Use Global</div>
<div class="a" style="left:0px;top:330px;width:149px;height:15px;background:linear-gradient(to right,#fbffe4,#e6ffd6)"></div>
<div class="a" style="left:149px;top:330px;width:150px;height:15px;background:linear-gradient(to right,#f4ffe6,#eaffdc)"></div>
<div class="a" style="left:299px;top:330px;width:150px;height:15px;background:#e8ffd4"></div>
<div class="a" style="left:449px;top:330px;width:732px;height:15px;background:#ebffd6"></div>
<div class="a" style="left:0;top:344px;width:1181px;height:1px;background:repeating-linear-gradient(to right,#a8a8a8 0 2px,transparent 2px 3px)"></div>
<div class="t" style="left:23.5px;top:329.5px;line-height:15px;height:15px;color:#000">LLCT<span style="word-spacing:0.3px"> - </span>Count</div>
<div class="t" style="left:158.5px;top:329.5px;line-height:15px;height:15px;color:#880c88">6</div>
<div class="t" style="left:308.5px;top:329.5px;line-height:15px;height:15px;color:#000">20</div>
<div class="a" style="left:0px;top:345px;width:149px;height:15px;background:#ffffdf"></div>
<div class="a" style="left:149px;top:345px;width:150px;height:15px;background:#ffffd8"></div>
<div class="a" style="left:299px;top:345px;width:150px;height:15px;background:#ffffd0"></div>
<div class="a" style="left:449px;top:345px;width:732px;height:15px;background:#ffffd0"></div>
<div class="a" style="left:0;top:359px;width:1181px;height:1px;background:repeating-linear-gradient(to right,rgba(255,255,255,0.75) 0 2px,transparent 2px 3px)"></div>
<div class="t" style="left:23.5px;top:344.5px;line-height:15px;height:15px;color:#159415">Leveled List Entries (sorted)</div>
<div class="a" style="left:0px;top:360px;width:149px;height:15px;background:#d0ffd0"></div>
<div class="a" style="left:149px;top:360px;width:150px;height:15px;background:#d0ffd0"></div>
<div class="a" style="left:299px;top:360px;width:150px;height:15px;background:#d0ffd0"></div>
<div class="a" style="left:449px;top:360px;width:732px;height:15px;background:#d0ffd0"></div>
<div class="a" style="left:0;top:374px;width:1181px;height:1px;background:repeating-linear-gradient(to right,rgba(255,255,255,0.75) 0 2px,transparent 2px 3px)"></div>
<div class="t" style="left:38.5px;top:359.5px;line-height:15px;height:15px;color:#880c88">Leveled List Entry</div>
<div class="a" style="left:0px;top:375px;width:149px;height:15px;background:#d0ffd0"></div>
<div class="a" style="left:149px;top:375px;width:150px;height:15px;background:#d0ffd0"></div>
<div class="a" style="left:299px;top:375px;width:150px;height:15px;background:#d0ffd0"></div>
<div class="a" style="left:449px;top:375px;width:732px;height:15px;background:#d0ffd0"></div>
<div class="a" style="left:0;top:389px;width:1181px;height:1px;background:repeating-linear-gradient(to right,rgba(255,255,255,0.75) 0 2px,transparent 2px 3px)"></div>
<div class="t" style="left:53.5px;top:374.5px;line-height:15px;height:15px;color:#880c88">LVLO<span style="word-spacing:0.3px"> - </span>Base Data</div>
<div class="a" style="left:0px;top:390px;width:149px;height:15px;background:#d0ffd0"></div>
<div class="a" style="left:149px;top:390px;width:150px;height:15px;background:#d0ffd0"></div>
<div class="a" style="left:299px;top:390px;width:150px;height:15px;background:#d0ffd0"></div>
<div class="a" style="left:449px;top:390px;width:732px;height:15px;background:#d0ffd0"></div>
<div class="a" style="left:0;top:404px;width:1181px;height:1px;background:repeating-linear-gradient(to right,rgba(255,255,255,0.75) 0 2px,transparent 2px 3px)"></div>
<div class="t" style="left:68.5px;top:389.5px;line-height:15px;height:15px;color:#880c88">Level</div>
<div class="t" style="left:158.5px;top:389.5px;line-height:15px;height:15px;color:#880c88">1</div>
<div class="t" style="left:308.5px;top:389.5px;line-height:15px;height:15px;color:#808080">1</div>
<div class="a" style="left:0px;top:405px;width:149px;height:15px;background:#d0ffd0"></div>
<div class="a" style="left:149px;top:405px;width:150px;height:15px;background:#d0ffd0"></div>
<div class="a" style="left:299px;top:405px;width:150px;height:15px;background:#d0ffd0"></div>
<div class="a" style="left:449px;top:405px;width:732px;height:15px;background:#d0ffd0"></div>
<div class="a" style="left:0;top:419px;width:1181px;height:1px;background:repeating-linear-gradient(to right,rgba(255,255,255,0.75) 0 2px,transparent 2px 3px)"></div>
<div class="t" style="left:68.5px;top:404.5px;line-height:15px;height:15px;color:#880c88">Reference</div>
<div class="t" style="left:158.5px;top:404.5px;line-height:15px;height:15px;color:#880c88">DLC04_EncCaveCricket01Templa...</div>
<div class="t" style="left:308.5px;top:404.5px;line-height:15px;height:15px;color:#808080">DLC04_EncCaveCricket01Templa...</div>
<div class="a" style="left:0px;top:420px;width:149px;height:15px;background:#d0ffd0"></div>
<div class="a" style="left:149px;top:420px;width:150px;height:15px;background:#d0ffd0"></div>
<div class="a" style="left:299px;top:420px;width:150px;height:15px;background:#d0ffd0"></div>
<div class="a" style="left:449px;top:420px;width:732px;height:15px;background:#d0ffd0"></div>
<div class="a" style="left:0;top:434px;width:1181px;height:1px;background:repeating-linear-gradient(to right,rgba(255,255,255,0.75) 0 2px,transparent 2px 3px)"></div>
<div class="t" style="left:68.5px;top:419.5px;line-height:15px;height:15px;color:#880c88">Count</div>
<div class="t" style="left:158.5px;top:419.5px;line-height:15px;height:15px;color:#880c88">1</div>
<div class="t" style="left:308.5px;top:419.5px;line-height:15px;height:15px;color:#808080">1</div>
<div class="a" style="left:0px;top:435px;width:149px;height:15px;background:#d0ffd0"></div>
<div class="a" style="left:149px;top:435px;width:150px;height:15px;background:#d0ffd0"></div>
<div class="a" style="left:299px;top:435px;width:150px;height:15px;background:#d0ffd0"></div>
<div class="a" style="left:449px;top:435px;width:732px;height:15px;background:#d0ffd0"></div>
<div class="a" style="left:0;top:449px;width:1181px;height:1px;background:repeating-linear-gradient(to right,rgba(255,255,255,0.75) 0 2px,transparent 2px 3px)"></div>
<div class="t" style="left:68.5px;top:434.5px;line-height:15px;height:15px;color:#880c88">Chance None</div>
<div class="t" style="left:158.5px;top:434.5px;line-height:15px;height:15px;color:#880c88">0</div>
<div class="t" style="left:308.5px;top:434.5px;line-height:15px;height:15px;color:#808080">0</div>
<div class="a" style="left:0px;top:450px;width:149px;height:15px;background:#d0ffd0"></div>
<div class="a" style="left:149px;top:450px;width:150px;height:15px;background:#e6ffe6"></div>
<div class="a" style="left:299px;top:450px;width:150px;height:15px;background:#e6ffe6"></div>
<div class="a" style="left:449px;top:450px;width:732px;height:15px;background:#e6ffe6"></div>
<div class="a" style="left:0;top:464px;width:1181px;height:1px;background:repeating-linear-gradient(to right,rgba(255,255,255,0.75) 0 2px,transparent 2px 3px)"></div>
<div class="t" style="left:53.5px;top:449.5px;line-height:15px;height:15px;color:#808080">COED<span style="word-spacing:0.3px"> - </span>Extra Data</div>
<div class="a" style="left:0px;top:465px;width:149px;height:15px;background:#ffffdf"></div>
<div class="a" style="left:149px;top:465px;width:150px;height:15px;background:#ffffee"></div>
<div class="a" style="left:299px;top:465px;width:150px;height:15px;background:#ffffcc"></div>
<div class="a" style="left:449px;top:465px;width:732px;height:15px;background:#ffffcc"></div>
<div class="a" style="left:0;top:479px;width:1181px;height:1px;background:repeating-linear-gradient(to right,rgba(255,255,255,0.75) 0 2px,transparent 2px 3px)"></div>
<div class="t" style="left:38.5px;top:464.5px;line-height:15px;height:15px;color:#159415">Leveled List Entry</div>
<div class="a" style="left:0px;top:480px;width:149px;height:15px;background:#ffffdf"></div>
<div class="a" style="left:149px;top:480px;width:150px;height:15px;background:#ffffee"></div>
<div class="a" style="left:299px;top:480px;width:150px;height:15px;background:#ffffcc"></div>
<div class="a" style="left:449px;top:480px;width:732px;height:15px;background:#ffffcc"></div>
<div class="a" style="left:0;top:494px;width:1181px;height:1px;background:repeating-linear-gradient(to right,rgba(255,255,255,0.75) 0 2px,transparent 2px 3px)"></div>
<div class="t" style="left:53.5px;top:479.5px;line-height:15px;height:15px;color:#159415">LVLO<span style="word-spacing:0.3px"> - </span>Base Data</div>
<div class="a" style="left:0px;top:495px;width:149px;height:15px;background:#ffffdf"></div>
<div class="a" style="left:149px;top:495px;width:150px;height:15px;background:#ffffee"></div>
<div class="a" style="left:299px;top:495px;width:150px;height:15px;background:#ffffcc"></div>
<div class="a" style="left:449px;top:495px;width:732px;height:15px;background:#ffffcc"></div>
<div class="a" style="left:0;top:509px;width:1181px;height:1px;background:repeating-linear-gradient(to right,rgba(255,255,255,0.75) 0 2px,transparent 2px 3px)"></div>
<div class="t" style="left:68.5px;top:494.5px;line-height:15px;height:15px;color:#159415">Level</div>
<div class="t" style="left:308.5px;top:494.5px;line-height:15px;height:15px;color:#159415">1</div>
<div class="a" style="left:0px;top:510px;width:149px;height:15px;background:#ffffdf"></div>
<div class="a" style="left:149px;top:510px;width:150px;height:15px;background:#ffffee"></div>
<div class="a" style="left:299px;top:510px;width:150px;height:15px;background:#ffffcc"></div>
<div class="a" style="left:449px;top:510px;width:732px;height:15px;background:#ffffcc"></div>
<div class="a" style="left:0;top:524px;width:1181px;height:1px;background:repeating-linear-gradient(to right,rgba(255,255,255,0.75) 0 2px,transparent 2px 3px)"></div>
<div class="t" style="left:68.5px;top:509.5px;line-height:15px;height:15px;color:#159415">Reference</div>
<div class="t" style="left:308.5px;top:509.5px;line-height:15px;height:15px;color:#159415">DLC04_EncCaveCricket01Templa...</div>
<div class="a" style="left:0px;top:525px;width:149px;height:15px;background:#ffffdf"></div>
<div class="a" style="left:149px;top:525px;width:150px;height:15px;background:#ffffee"></div>
<div class="a" style="left:299px;top:525px;width:150px;height:15px;background:#ffffcc"></div>
<div class="a" style="left:449px;top:525px;width:732px;height:15px;background:#ffffcc"></div>
<div class="a" style="left:0;top:539px;width:1181px;height:1px;background:repeating-linear-gradient(to right,rgba(255,255,255,0.75) 0 2px,transparent 2px 3px)"></div>
<div class="t" style="left:68.5px;top:524.5px;line-height:15px;height:15px;color:#159415">Count</div>
<div class="t" style="left:308.5px;top:524.5px;line-height:15px;height:15px;color:#159415">1</div>
<div class="a" style="left:0px;top:540px;width:149px;height:15px;background:#ffffdf"></div>
<div class="a" style="left:149px;top:540px;width:150px;height:15px;background:#ffffee"></div>
<div class="a" style="left:299px;top:540px;width:150px;height:15px;background:#ffffcc"></div>
<div class="a" style="left:449px;top:540px;width:732px;height:15px;background:#ffffcc"></div>
<div class="a" style="left:0;top:554px;width:1181px;height:1px;background:repeating-linear-gradient(to right,rgba(255,255,255,0.75) 0 2px,transparent 2px 3px)"></div>
<div class="t" style="left:68.5px;top:539.5px;line-height:15px;height:15px;color:#159415">Chance None</div>
<div class="t" style="left:308.5px;top:539.5px;line-height:15px;height:15px;color:#159415">0</div>
<div class="a" style="left:0px;top:555px;width:149px;height:15px;background:#d0ffd0"></div>
<div class="a" style="left:149px;top:555px;width:150px;height:15px;background:#e6ffe6"></div>
<div class="a" style="left:299px;top:555px;width:150px;height:15px;background:#e6ffe6"></div>
<div class="a" style="left:449px;top:555px;width:732px;height:15px;background:#e6ffe6"></div>
<div class="a" style="left:0;top:569px;width:1181px;height:1px;background:repeating-linear-gradient(to right,rgba(255,255,255,0.75) 0 2px,transparent 2px 3px)"></div>
<div class="t" style="left:53.5px;top:554.5px;line-height:15px;height:15px;color:#808080">COED<span style="word-spacing:0.3px"> - </span>Extra Data</div>
<div class="a" style="left:0px;top:570px;width:149px;height:15px;background:#ffffdf"></div>
<div class="a" style="left:149px;top:570px;width:150px;height:15px;background:#ffffee"></div>
<div class="a" style="left:299px;top:570px;width:150px;height:15px;background:#ffffcc"></div>
<div class="a" style="left:449px;top:570px;width:732px;height:15px;background:#ffffcc"></div>
<div class="a" style="left:0;top:584px;width:1181px;height:1px;background:repeating-linear-gradient(to right,rgba(255,255,255,0.75) 0 2px,transparent 2px 3px)"></div>
<div class="t" style="left:38.5px;top:569.5px;line-height:15px;height:15px;color:#159415">Leveled List Entry</div>
<div class="a" style="left:0px;top:585px;width:149px;height:15px;background:#ffffdf"></div>
<div class="a" style="left:149px;top:585px;width:150px;height:15px;background:#ffffee"></div>
<div class="a" style="left:299px;top:585px;width:150px;height:15px;background:#ffffcc"></div>
<div class="a" style="left:449px;top:585px;width:732px;height:15px;background:#ffffcc"></div>
<div class="a" style="left:0;top:599px;width:1181px;height:1px;background:repeating-linear-gradient(to right,rgba(255,255,255,0.75) 0 2px,transparent 2px 3px)"></div>
<div class="t" style="left:53.5px;top:584.5px;line-height:15px;height:15px;color:#159415">LVLO<span style="word-spacing:0.3px"> - </span>Base Data</div>
<div class="a" style="left:0px;top:600px;width:149px;height:15px;background:#ffffdf"></div>
<div class="a" style="left:149px;top:600px;width:150px;height:15px;background:#ffffee"></div>
<div class="a" style="left:299px;top:600px;width:150px;height:15px;background:#ffffcc"></div>
<div class="a" style="left:449px;top:600px;width:732px;height:15px;background:#ffffcc"></div>
<div class="a" style="left:0;top:614px;width:1181px;height:1px;background:repeating-linear-gradient(to right,rgba(255,255,255,0.75) 0 2px,transparent 2px 3px)"></div>
<div class="t" style="left:68.5px;top:599.5px;line-height:15px;height:15px;color:#159415">Level</div>
<div class="t" style="left:308.5px;top:599.5px;line-height:15px;height:15px;color:#159415">1</div>
<div class="a" style="left:0px;top:615px;width:149px;height:15px;background:#ffffdf"></div>
<div class="a" style="left:149px;top:615px;width:150px;height:15px;background:#ffffee"></div>
<div class="a" style="left:299px;top:615px;width:150px;height:15px;background:#ffffcc"></div>
<div class="a" style="left:449px;top:615px;width:732px;height:15px;background:#ffffcc"></div>
<div class="a" style="left:0;top:629px;width:1181px;height:1px;background:repeating-linear-gradient(to right,rgba(255,255,255,0.75) 0 2px,transparent 2px 3px)"></div>
<div class="t" style="left:68.5px;top:614.5px;line-height:15px;height:15px;color:#159415">Reference</div>
<div class="t" style="left:308.5px;top:614.5px;line-height:15px;height:15px;color:#159415">DLC04_EncCaveCricket01Templa...</div>
<div class="a" style="left:0px;top:630px;width:149px;height:15px;background:#ffffdf"></div>
<div class="a" style="left:149px;top:630px;width:150px;height:15px;background:#ffffee"></div>
<div class="a" style="left:299px;top:630px;width:150px;height:15px;background:#ffffcc"></div>
<div class="a" style="left:449px;top:630px;width:732px;height:15px;background:#ffffcc"></div>
<div class="a" style="left:0;top:644px;width:1181px;height:1px;background:repeating-linear-gradient(to right,rgba(255,255,255,0.75) 0 2px,transparent 2px 3px)"></div>
<div class="t" style="left:68.5px;top:629.5px;line-height:15px;height:15px;color:#159415">Count</div>
<div class="t" style="left:308.5px;top:629.5px;line-height:15px;height:15px;color:#159415">1</div>
<div class="a" style="left:0px;top:645px;width:149px;height:15px;background:#ffffdf"></div>
<div class="a" style="left:149px;top:645px;width:150px;height:15px;background:#ffffee"></div>
<div class="a" style="left:299px;top:645px;width:150px;height:15px;background:#ffffcc"></div>
<div class="a" style="left:449px;top:645px;width:732px;height:15px;background:#ffffcc"></div>
<div class="a" style="left:0;top:659px;width:1181px;height:1px;background:repeating-linear-gradient(to right,rgba(255,255,255,0.75) 0 2px,transparent 2px 3px)"></div>
<div class="t" style="left:68.5px;top:644.5px;line-height:15px;height:15px;color:#159415">Chance None</div>
<div class="t" style="left:308.5px;top:644.5px;line-height:15px;height:15px;color:#159415">0</div>
<div class="a" style="left:0px;top:660px;width:149px;height:15px;background:#d0ffd0"></div>
<div class="a" style="left:149px;top:660px;width:150px;height:15px;background:#e6ffe6"></div>
<div class="a" style="left:299px;top:660px;width:150px;height:15px;background:#e6ffe6"></div>
<div class="a" style="left:449px;top:660px;width:732px;height:15px;background:#e6ffe6"></div>
<div class="a" style="left:0;top:674px;width:1181px;height:1px;background:repeating-linear-gradient(to right,rgba(255,255,255,0.75) 0 2px,transparent 2px 3px)"></div>
<div class="t" style="left:53.5px;top:659.5px;line-height:15px;height:15px;color:#808080">COED<span style="word-spacing:0.3px"> - </span>Extra Data</div>
<div class="a" style="left:0px;top:675px;width:149px;height:15px;background:#ffffdf"></div>
<div class="a" style="left:149px;top:675px;width:150px;height:15px;background:#ffffee"></div>
<div class="a" style="left:299px;top:675px;width:150px;height:15px;background:#ffffcc"></div>
<div class="a" style="left:449px;top:675px;width:732px;height:15px;background:#ffffcc"></div>
<div class="a" style="left:0;top:689px;width:1181px;height:1px;background:repeating-linear-gradient(to right,rgba(255,255,255,0.75) 0 2px,transparent 2px 3px)"></div>
<div class="t" style="left:38.5px;top:674.5px;line-height:15px;height:15px;color:#159415">Leveled List Entry</div>
<div class="a" style="left:0px;top:690px;width:149px;height:15px;background:#ffffdf"></div>
<div class="a" style="left:149px;top:690px;width:150px;height:15px;background:#ffffee"></div>
<div class="a" style="left:299px;top:690px;width:150px;height:15px;background:#ffffcc"></div>
<div class="a" style="left:449px;top:690px;width:732px;height:15px;background:#ffffcc"></div>
<div class="a" style="left:0;top:704px;width:1181px;height:1px;background:repeating-linear-gradient(to right,rgba(255,255,255,0.75) 0 2px,transparent 2px 3px)"></div>
<div class="t" style="left:53.5px;top:689.5px;line-height:15px;height:15px;color:#159415">LVLO<span style="word-spacing:0.3px"> - </span>Base Data</div>
<div class="a" style="left:0px;top:705px;width:149px;height:15px;background:#ffffdf"></div>
<div class="a" style="left:149px;top:705px;width:150px;height:15px;background:#ffffee"></div>
<div class="a" style="left:299px;top:705px;width:150px;height:15px;background:#ffffcc"></div>
<div class="a" style="left:449px;top:705px;width:732px;height:15px;background:#ffffcc"></div>
<div class="a" style="left:0;top:719px;width:1181px;height:1px;background:repeating-linear-gradient(to right,rgba(255,255,255,0.75) 0 2px,transparent 2px 3px)"></div>
<div class="t" style="left:68.5px;top:704.5px;line-height:15px;height:15px;color:#159415">Level</div>
<div class="t" style="left:308.5px;top:704.5px;line-height:15px;height:15px;color:#159415">1</div>
<div class="a" style="left:0px;top:720px;width:149px;height:15px;background:#ffffdf"></div>
<div class="a" style="left:149px;top:720px;width:150px;height:15px;background:#ffffee"></div>
<div class="a" style="left:299px;top:720px;width:150px;height:15px;background:#ffffcc"></div>
<div class="a" style="left:449px;top:720px;width:732px;height:15px;background:#ffffcc"></div>
<div class="a" style="left:0;top:734px;width:1181px;height:1px;background:repeating-linear-gradient(to right,rgba(255,255,255,0.75) 0 2px,transparent 2px 3px)"></div>
<div class="t" style="left:68.5px;top:719.5px;line-height:15px;height:15px;color:#159415">Reference</div>
<div class="t" style="left:308.5px;top:719.5px;line-height:15px;height:15px;color:#159415">DLC04_EncCaveCricket01Templa...</div>
<div class="a" style="left:0px;top:735px;width:149px;height:15px;background:#ffffdf"></div>
<div class="a" style="left:149px;top:735px;width:150px;height:15px;background:#ffffee"></div>
<div class="a" style="left:299px;top:735px;width:150px;height:15px;background:#ffffcc"></div>
<div class="a" style="left:449px;top:735px;width:732px;height:15px;background:#ffffcc"></div>
<div class="a" style="left:0;top:749px;width:1181px;height:1px;background:repeating-linear-gradient(to right,rgba(255,255,255,0.75) 0 2px,transparent 2px 3px)"></div>
<div class="t" style="left:68.5px;top:734.5px;line-height:15px;height:15px;color:#159415">Count</div>
<div class="t" style="left:308.5px;top:734.5px;line-height:15px;height:15px;color:#159415">1</div>
<div class="a" style="left:0px;top:750px;width:149px;height:15px;background:#ffffdf"></div>
<div class="a" style="left:149px;top:750px;width:150px;height:15px;background:#ffffee"></div>
<div class="a" style="left:299px;top:750px;width:150px;height:15px;background:#ffffcc"></div>
<div class="a" style="left:449px;top:750px;width:732px;height:15px;background:#ffffcc"></div>
<div class="a" style="left:0;top:764px;width:1181px;height:1px;background:repeating-linear-gradient(to right,rgba(255,255,255,0.75) 0 2px,transparent 2px 3px)"></div>
<div class="t" style="left:68.5px;top:749.5px;line-height:15px;height:15px;color:#159415">Chance None</div>
<div class="t" style="left:308.5px;top:749.5px;line-height:15px;height:15px;color:#159415">0</div>
<div class="a" style="left:0px;top:765px;width:149px;height:15px;background:#d0ffd0"></div>
<div class="a" style="left:149px;top:765px;width:150px;height:15px;background:#e6ffe6"></div>
<div class="a" style="left:299px;top:765px;width:150px;height:15px;background:#e6ffe6"></div>
<div class="a" style="left:449px;top:765px;width:732px;height:15px;background:#e6ffe6"></div>
<div class="a" style="left:0;top:779px;width:1181px;height:1px;background:repeating-linear-gradient(to right,rgba(255,255,255,0.75) 0 2px,transparent 2px 3px)"></div>
<div class="t" style="left:53.5px;top:764.5px;line-height:15px;height:15px;color:#808080">COED<span style="word-spacing:0.3px"> - </span>Extra Data</div>
<div class="a" style="left:0px;top:780px;width:149px;height:15px;background:#ffffdf"></div>
<div class="a" style="left:149px;top:780px;width:150px;height:15px;background:#ffffee"></div>
<div class="a" style="left:299px;top:780px;width:150px;height:15px;background:#ffffcc"></div>
<div class="a" style="left:449px;top:780px;width:732px;height:15px;background:#ffffcc"></div>
<div class="a" style="left:0;top:794px;width:1181px;height:1px;background:repeating-linear-gradient(to right,rgba(255,255,255,0.75) 0 2px,transparent 2px 3px)"></div>
<div class="t" style="left:38.5px;top:779.5px;line-height:15px;height:15px;color:#159415">Leveled List Entry</div>
<div class="a" style="left:0px;top:795px;width:149px;height:15px;background:#ffffdf"></div>
<div class="a" style="left:149px;top:795px;width:150px;height:15px;background:#ffffee"></div>
<div class="a" style="left:299px;top:795px;width:150px;height:15px;background:#ffffcc"></div>
<div class="a" style="left:449px;top:795px;width:732px;height:15px;background:#ffffcc"></div>
<div class="a" style="left:0;top:809px;width:1181px;height:1px;background:repeating-linear-gradient(to right,rgba(255,255,255,0.75) 0 2px,transparent 2px 3px)"></div>
<div class="t" style="left:53.5px;top:794.5px;line-height:15px;height:15px;color:#159415">LVLO<span style="word-spacing:0.3px"> - </span>Base Data</div>
<div class="a" style="left:0px;top:810px;width:149px;height:15px;background:#ffffdf"></div>
<div class="a" style="left:149px;top:810px;width:150px;height:15px;background:#ffffee"></div>
<div class="a" style="left:299px;top:810px;width:150px;height:15px;background:#ffffcc"></div>
<div class="a" style="left:449px;top:810px;width:732px;height:15px;background:#ffffcc"></div>
<div class="a" style="left:0;top:824px;width:1181px;height:1px;background:repeating-linear-gradient(to right,rgba(255,255,255,0.75) 0 2px,transparent 2px 3px)"></div>
<div class="t" style="left:68.5px;top:809.5px;line-height:15px;height:15px;color:#159415">Level</div>
<div class="t" style="left:308.5px;top:809.5px;line-height:15px;height:15px;color:#159415">1</div>
<div class="a" style="left:0px;top:825px;width:149px;height:15px;background:#ffffdf"></div>
<div class="a" style="left:149px;top:825px;width:150px;height:15px;background:#ffffee"></div>
<div class="a" style="left:299px;top:825px;width:150px;height:15px;background:#ffffcc"></div>
<div class="a" style="left:449px;top:825px;width:732px;height:15px;background:#ffffcc"></div>
<div class="a" style="left:0;top:839px;width:1181px;height:1px;background:repeating-linear-gradient(to right,rgba(255,255,255,0.75) 0 2px,transparent 2px 3px)"></div>
<div class="t" style="left:68.5px;top:824.5px;line-height:15px;height:15px;color:#159415">Reference</div>
<div class="t" style="left:308.5px;top:824.5px;line-height:15px;height:15px;color:#159415">DLC04_EncCaveCricket01Templa...</div>
<div class="a" style="left:0px;top:840px;width:149px;height:15px;background:#ffffdf"></div>
<div class="a" style="left:149px;top:840px;width:150px;height:15px;background:#ffffee"></div>
<div class="a" style="left:299px;top:840px;width:150px;height:15px;background:#ffffcc"></div>
<div class="a" style="left:449px;top:840px;width:732px;height:15px;background:#ffffcc"></div>
<div class="a" style="left:0;top:854px;width:1181px;height:1px;background:repeating-linear-gradient(to right,rgba(255,255,255,0.75) 0 2px,transparent 2px 3px)"></div>
<div class="t" style="left:68.5px;top:839.5px;line-height:15px;height:15px;color:#159415">Count</div>
<div class="t" style="left:308.5px;top:839.5px;line-height:15px;height:15px;color:#159415">1</div>
<div class="a" style="left:0px;top:855px;width:149px;height:15px;background:#ffffdf"></div>
<div class="a" style="left:149px;top:855px;width:150px;height:15px;background:#ffffee"></div>
<div class="a" style="left:299px;top:855px;width:150px;height:15px;background:#ffffcc"></div>
<div class="a" style="left:449px;top:855px;width:732px;height:15px;background:#ffffcc"></div>
<div class="a" style="left:0;top:869px;width:1181px;height:1px;background:repeating-linear-gradient(to right,rgba(255,255,255,0.75) 0 2px,transparent 2px 3px)"></div>
<div class="t" style="left:68.5px;top:854.5px;line-height:15px;height:15px;color:#159415">Chance None</div>
<div class="t" style="left:308.5px;top:854.5px;line-height:15px;height:15px;color:#159415">0</div>
<div class="a" style="left:0px;top:870px;width:149px;height:15px;background:#d0ffd0"></div>
<div class="a" style="left:149px;top:870px;width:150px;height:15px;background:#e6ffe6"></div>
<div class="a" style="left:299px;top:870px;width:150px;height:15px;background:#e6ffe6"></div>
<div class="a" style="left:449px;top:870px;width:732px;height:15px;background:#e6ffe6"></div>
<div class="a" style="left:0;top:884px;width:1181px;height:1px;background:repeating-linear-gradient(to right,rgba(255,255,255,0.75) 0 2px,transparent 2px 3px)"></div>
<div class="t" style="left:53.5px;top:869.5px;line-height:15px;height:15px;color:#808080">COED<span style="word-spacing:0.3px"> - </span>Extra Data</div>
<div class="a" style="left:0px;top:885px;width:149px;height:15px;background:#ffffdf"></div>
<div class="a" style="left:149px;top:885px;width:150px;height:15px;background:#ffffee"></div>
<div class="a" style="left:299px;top:885px;width:150px;height:15px;background:#ffffcc"></div>
<div class="a" style="left:449px;top:885px;width:732px;height:15px;background:#ffffcc"></div>
<div class="a" style="left:0;top:899px;width:1181px;height:1px;background:repeating-linear-gradient(to right,rgba(255,255,255,0.75) 0 2px,transparent 2px 3px)"></div>
<div class="t" style="left:38.5px;top:884.5px;line-height:15px;height:15px;color:#159415">Leveled List Entry</div>
<div class="a" style="left:0px;top:900px;width:149px;height:15px;background:#ffffdf"></div>
<div class="a" style="left:149px;top:900px;width:150px;height:15px;background:#ffffee"></div>
<div class="a" style="left:299px;top:900px;width:150px;height:15px;background:#ffffcc"></div>
<div class="a" style="left:449px;top:900px;width:732px;height:15px;background:#ffffcc"></div>
<div class="a" style="left:0;top:914px;width:1181px;height:1px;background:repeating-linear-gradient(to right,rgba(255,255,255,0.75) 0 2px,transparent 2px 3px)"></div>
<div class="t" style="left:53.5px;top:899.5px;line-height:15px;height:15px;color:#159415">LVLO<span style="word-spacing:0.3px"> - </span>Base Data</div>
<div class="a" style="left:8px;top:4px;width:7px;height:7px;background:linear-gradient(#fff,#e4e4e4);border:1px solid #b0b0b0;border-radius:1.5px"></div>
<div class="a" style="left:9.5px;top:7px;width:4px;height:1px;background:#6a7cc0"></div>
<div class="a" style="left:16px;top:7px;width:6px;height:1px;background:repeating-linear-gradient(to right,#c4c4c4 0 1px,transparent 1px 2px)"></div>
<div class="a" style="left:11px;top:11px;width:1px;height:4px;background:repeating-linear-gradient(to bottom,#b8b8b8 0 1px,transparent 1px 2px)"></div>
<div class="a" style="left:27px;top:22px;width:9px;height:1px;background:repeating-linear-gradient(to right,#c4c4c4 0 1px,transparent 1px 2px)"></div>
<div class="a" style="left:26px;top:15px;width:1px;height:7px;background:repeating-linear-gradient(to bottom,#b8b8b8 0 1px,transparent 1px 2px)"></div>
<div class="a" style="left:26px;top:23px;width:1px;height:7px;background:repeating-linear-gradient(to bottom,#b8b8b8 0 1px,transparent 1px 2px)"></div>
<div class="a" style="left:11px;top:15px;width:1px;height:15px;background:repeating-linear-gradient(to bottom,#b8b8b8 0 1px,transparent 1px 2px)"></div>
<div class="a" style="left:27px;top:37px;width:9px;height:1px;background:repeating-linear-gradient(to right,#c4c4c4 0 1px,transparent 1px 2px)"></div>
<div class="a" style="left:26px;top:30px;width:1px;height:7px;background:repeating-linear-gradient(to bottom,#b8b8b8 0 1px,transparent 1px 2px)"></div>
<div class="a" style="left:26px;top:38px;width:1px;height:7px;background:repeating-linear-gradient(to bottom,#b8b8b8 0 1px,transparent 1px 2px)"></div>
<div class="a" style="left:11px;top:30px;width:1px;height:15px;background:repeating-linear-gradient(to bottom,#b8b8b8 0 1px,transparent 1px 2px)"></div>
<div class="a" style="left:27px;top:52px;width:9px;height:1px;background:repeating-linear-gradient(to right,#c4c4c4 0 1px,transparent 1px 2px)"></div>
<div class="a" style="left:26px;top:45px;width:1px;height:7px;background:repeating-linear-gradient(to bottom,#b8b8b8 0 1px,transparent 1px 2px)"></div>
<div class="a" style="left:26px;top:53px;width:1px;height:7px;background:repeating-linear-gradient(to bottom,#b8b8b8 0 1px,transparent 1px 2px)"></div>
<div class="a" style="left:11px;top:45px;width:1px;height:15px;background:repeating-linear-gradient(to bottom,#b8b8b8 0 1px,transparent 1px 2px)"></div>
<div class="a" style="left:27px;top:67px;width:9px;height:1px;background:repeating-linear-gradient(to right,#c4c4c4 0 1px,transparent 1px 2px)"></div>
<div class="a" style="left:26px;top:60px;width:1px;height:7px;background:repeating-linear-gradient(to bottom,#b8b8b8 0 1px,transparent 1px 2px)"></div>
<div class="a" style="left:26px;top:68px;width:1px;height:7px;background:repeating-linear-gradient(to bottom,#b8b8b8 0 1px,transparent 1px 2px)"></div>
<div class="a" style="left:11px;top:60px;width:1px;height:15px;background:repeating-linear-gradient(to bottom,#b8b8b8 0 1px,transparent 1px 2px)"></div>
<div class="a" style="left:27px;top:82px;width:9px;height:1px;background:repeating-linear-gradient(to right,#c4c4c4 0 1px,transparent 1px 2px)"></div>
<div class="a" style="left:26px;top:75px;width:1px;height:7px;background:repeating-linear-gradient(to bottom,#b8b8b8 0 1px,transparent 1px 2px)"></div>
<div class="a" style="left:26px;top:83px;width:1px;height:7px;background:repeating-linear-gradient(to bottom,#b8b8b8 0 1px,transparent 1px 2px)"></div>
<div class="a" style="left:11px;top:75px;width:1px;height:15px;background:repeating-linear-gradient(to bottom,#b8b8b8 0 1px,transparent 1px 2px)"></div>
<div class="a" style="left:27px;top:97px;width:9px;height:1px;background:repeating-linear-gradient(to right,#c4c4c4 0 1px,transparent 1px 2px)"></div>
<div class="a" style="left:26px;top:90px;width:1px;height:7px;background:repeating-linear-gradient(to bottom,#b8b8b8 0 1px,transparent 1px 2px)"></div>
<div class="a" style="left:26px;top:98px;width:1px;height:7px;background:repeating-linear-gradient(to bottom,#b8b8b8 0 1px,transparent 1px 2px)"></div>
<div class="a" style="left:11px;top:90px;width:1px;height:15px;background:repeating-linear-gradient(to bottom,#b8b8b8 0 1px,transparent 1px 2px)"></div>
<div class="a" style="left:27px;top:112px;width:9px;height:1px;background:repeating-linear-gradient(to right,#c4c4c4 0 1px,transparent 1px 2px)"></div>
<div class="a" style="left:26px;top:105px;width:1px;height:7px;background:repeating-linear-gradient(to bottom,#b8b8b8 0 1px,transparent 1px 2px)"></div>
<div class="a" style="left:11px;top:105px;width:1px;height:15px;background:repeating-linear-gradient(to bottom,#b8b8b8 0 1px,transparent 1px 2px)"></div>
<div class="a" style="left:12px;top:127px;width:9px;height:1px;background:repeating-linear-gradient(to right,#c4c4c4 0 1px,transparent 1px 2px)"></div>
<div class="a" style="left:11px;top:120px;width:1px;height:7px;background:repeating-linear-gradient(to bottom,#b8b8b8 0 1px,transparent 1px 2px)"></div>
<div class="a" style="left:11px;top:128px;width:1px;height:7px;background:repeating-linear-gradient(to bottom,#b8b8b8 0 1px,transparent 1px 2px)"></div>
<div class="a" style="left:8px;top:139px;width:7px;height:7px;background:linear-gradient(#fff,#e4e4e4);border:1px solid #b0b0b0;border-radius:1.5px"></div>
<div class="a" style="left:9.5px;top:142px;width:4px;height:1px;background:#6a7cc0"></div>
<div class="a" style="left:16px;top:142px;width:6px;height:1px;background:repeating-linear-gradient(to right,#c4c4c4 0 1px,transparent 1px 2px)"></div>
<div class="a" style="left:11px;top:135px;width:1px;height:4px;background:repeating-linear-gradient(to bottom,#b8b8b8 0 1px,transparent 1px 2px)"></div>
<div class="a" style="left:11px;top:146px;width:1px;height:4px;background:repeating-linear-gradient(to bottom,#b8b8b8 0 1px,transparent 1px 2px)"></div>
<div class="a" style="left:27px;top:157px;width:9px;height:1px;background:repeating-linear-gradient(to right,#c4c4c4 0 1px,transparent 1px 2px)"></div>
<div class="a" style="left:26px;top:150px;width:1px;height:7px;background:repeating-linear-gradient(to bottom,#b8b8b8 0 1px,transparent 1px 2px)"></div>
<div class="a" style="left:26px;top:158px;width:1px;height:7px;background:repeating-linear-gradient(to bottom,#b8b8b8 0 1px,transparent 1px 2px)"></div>
<div class="a" style="left:11px;top:150px;width:1px;height:15px;background:repeating-linear-gradient(to bottom,#b8b8b8 0 1px,transparent 1px 2px)"></div>
<div class="a" style="left:27px;top:172px;width:9px;height:1px;background:repeating-linear-gradient(to right,#c4c4c4 0 1px,transparent 1px 2px)"></div>
<div class="a" style="left:26px;top:165px;width:1px;height:7px;background:repeating-linear-gradient(to bottom,#b8b8b8 0 1px,transparent 1px 2px)"></div>
<div class="a" style="left:26px;top:173px;width:1px;height:7px;background:repeating-linear-gradient(to bottom,#b8b8b8 0 1px,transparent 1px 2px)"></div>
<div class="a" style="left:11px;top:165px;width:1px;height:15px;background:repeating-linear-gradient(to bottom,#b8b8b8 0 1px,transparent 1px 2px)"></div>
<div class="a" style="left:27px;top:187px;width:9px;height:1px;background:repeating-linear-gradient(to right,#c4c4c4 0 1px,transparent 1px 2px)"></div>
<div class="a" style="left:26px;top:180px;width:1px;height:7px;background:repeating-linear-gradient(to bottom,#b8b8b8 0 1px,transparent 1px 2px)"></div>
<div class="a" style="left:26px;top:188px;width:1px;height:7px;background:repeating-linear-gradient(to bottom,#b8b8b8 0 1px,transparent 1px 2px)"></div>
<div class="a" style="left:11px;top:180px;width:1px;height:15px;background:repeating-linear-gradient(to bottom,#b8b8b8 0 1px,transparent 1px 2px)"></div>
<div class="a" style="left:27px;top:202px;width:9px;height:1px;background:repeating-linear-gradient(to right,#c4c4c4 0 1px,transparent 1px 2px)"></div>
<div class="a" style="left:26px;top:195px;width:1px;height:7px;background:repeating-linear-gradient(to bottom,#b8b8b8 0 1px,transparent 1px 2px)"></div>
<div class="a" style="left:26px;top:203px;width:1px;height:7px;background:repeating-linear-gradient(to bottom,#b8b8b8 0 1px,transparent 1px 2px)"></div>
<div class="a" style="left:11px;top:195px;width:1px;height:15px;background:repeating-linear-gradient(to bottom,#b8b8b8 0 1px,transparent 1px 2px)"></div>
<div class="a" style="left:27px;top:217px;width:9px;height:1px;background:repeating-linear-gradient(to right,#c4c4c4 0 1px,transparent 1px 2px)"></div>
<div class="a" style="left:26px;top:210px;width:1px;height:7px;background:repeating-linear-gradient(to bottom,#b8b8b8 0 1px,transparent 1px 2px)"></div>
<div class="a" style="left:26px;top:218px;width:1px;height:7px;background:repeating-linear-gradient(to bottom,#b8b8b8 0 1px,transparent 1px 2px)"></div>
<div class="a" style="left:11px;top:210px;width:1px;height:15px;background:repeating-linear-gradient(to bottom,#b8b8b8 0 1px,transparent 1px 2px)"></div>
<div class="a" style="left:27px;top:232px;width:9px;height:1px;background:repeating-linear-gradient(to right,#c4c4c4 0 1px,transparent 1px 2px)"></div>
<div class="a" style="left:26px;top:225px;width:1px;height:7px;background:repeating-linear-gradient(to bottom,#b8b8b8 0 1px,transparent 1px 2px)"></div>
<div class="a" style="left:11px;top:225px;width:1px;height:15px;background:repeating-linear-gradient(to bottom,#b8b8b8 0 1px,transparent 1px 2px)"></div>
<div class="a" style="left:12px;top:247px;width:9px;height:1px;background:repeating-linear-gradient(to right,#c4c4c4 0 1px,transparent 1px 2px)"></div>
<div class="a" style="left:11px;top:240px;width:1px;height:7px;background:repeating-linear-gradient(to bottom,#b8b8b8 0 1px,transparent 1px 2px)"></div>
<div class="a" style="left:11px;top:248px;width:1px;height:7px;background:repeating-linear-gradient(to bottom,#b8b8b8 0 1px,transparent 1px 2px)"></div>
<div class="a" style="left:12px;top:262px;width:9px;height:1px;background:repeating-linear-gradient(to right,#c4c4c4 0 1px,transparent 1px 2px)"></div>
<div class="a" style="left:11px;top:255px;width:1px;height:7px;background:repeating-linear-gradient(to bottom,#b8b8b8 0 1px,transparent 1px 2px)"></div>
<div class="a" style="left:11px;top:263px;width:1px;height:7px;background:repeating-linear-gradient(to bottom,#b8b8b8 0 1px,transparent 1px 2px)"></div>
<div class="a" style="left:8px;top:274px;width:7px;height:7px;background:linear-gradient(#fff,#e4e4e4);border:1px solid #b0b0b0;border-radius:1.5px"></div>
<div class="a" style="left:9.5px;top:277px;width:4px;height:1px;background:#6a7cc0"></div>
<div class="a" style="left:16px;top:277px;width:6px;height:1px;background:repeating-linear-gradient(to right,#c4c4c4 0 1px,transparent 1px 2px)"></div>
<div class="a" style="left:11px;top:270px;width:1px;height:4px;background:repeating-linear-gradient(to bottom,#b8b8b8 0 1px,transparent 1px 2px)"></div>
<div class="a" style="left:11px;top:281px;width:1px;height:4px;background:repeating-linear-gradient(to bottom,#b8b8b8 0 1px,transparent 1px 2px)"></div>
<div class="a" style="left:27px;top:292px;width:9px;height:1px;background:repeating-linear-gradient(to right,#c4c4c4 0 1px,transparent 1px 2px)"></div>
<div class="a" style="left:26px;top:285px;width:1px;height:7px;background:repeating-linear-gradient(to bottom,#b8b8b8 0 1px,transparent 1px 2px)"></div>
<div class="a" style="left:26px;top:293px;width:1px;height:7px;background:repeating-linear-gradient(to bottom,#b8b8b8 0 1px,transparent 1px 2px)"></div>
<div class="a" style="left:11px;top:285px;width:1px;height:15px;background:repeating-linear-gradient(to bottom,#b8b8b8 0 1px,transparent 1px 2px)"></div>
<div class="a" style="left:27px;top:307px;width:9px;height:1px;background:repeating-linear-gradient(to right,#c4c4c4 0 1px,transparent 1px 2px)"></div>
<div class="a" style="left:26px;top:300px;width:1px;height:7px;background:repeating-linear-gradient(to bottom,#b8b8b8 0 1px,transparent 1px 2px)"></div>
<div class="a" style="left:11px;top:300px;width:1px;height:15px;background:repeating-linear-gradient(to bottom,#b8b8b8 0 1px,transparent 1px 2px)"></div>
<div class="a" style="left:12px;top:322px;width:9px;height:1px;background:repeating-linear-gradient(to right,#c4c4c4 0 1px,transparent 1px 2px)"></div>
<div class="a" style="left:11px;top:315px;width:1px;height:7px;background:repeating-linear-gradient(to bottom,#b8b8b8 0 1px,transparent 1px 2px)"></div>
<div class="a" style="left:11px;top:323px;width:1px;height:7px;background:repeating-linear-gradient(to bottom,#b8b8b8 0 1px,transparent 1px 2px)"></div>
<div class="a" style="left:12px;top:337px;width:9px;height:1px;background:repeating-linear-gradient(to right,#c4c4c4 0 1px,transparent 1px 2px)"></div>
<div class="a" style="left:11px;top:330px;width:1px;height:7px;background:repeating-linear-gradient(to bottom,#b8b8b8 0 1px,transparent 1px 2px)"></div>
<div class="a" style="left:11px;top:338px;width:1px;height:7px;background:repeating-linear-gradient(to bottom,#b8b8b8 0 1px,transparent 1px 2px)"></div>
<div class="a" style="left:8px;top:349px;width:7px;height:7px;background:linear-gradient(#fff,#e4e4e4);border:1px solid #b0b0b0;border-radius:1.5px"></div>
<div class="a" style="left:9.5px;top:352px;width:4px;height:1px;background:#6a7cc0"></div>
<div class="a" style="left:16px;top:352px;width:6px;height:1px;background:repeating-linear-gradient(to right,#c4c4c4 0 1px,transparent 1px 2px)"></div>
<div class="a" style="left:11px;top:345px;width:1px;height:4px;background:repeating-linear-gradient(to bottom,#b8b8b8 0 1px,transparent 1px 2px)"></div>
<div class="a" style="left:11px;top:356px;width:1px;height:4px;background:repeating-linear-gradient(to bottom,#b8b8b8 0 1px,transparent 1px 2px)"></div>
<div class="a" style="left:23px;top:364px;width:7px;height:7px;background:linear-gradient(#fff,#e4e4e4);border:1px solid #b0b0b0;border-radius:1.5px"></div>
<div class="a" style="left:24.5px;top:367px;width:4px;height:1px;background:#6a7cc0"></div>
<div class="a" style="left:31px;top:367px;width:6px;height:1px;background:repeating-linear-gradient(to right,#c4c4c4 0 1px,transparent 1px 2px)"></div>
<div class="a" style="left:26px;top:360px;width:1px;height:4px;background:repeating-linear-gradient(to bottom,#b8b8b8 0 1px,transparent 1px 2px)"></div>
<div class="a" style="left:26px;top:371px;width:1px;height:4px;background:repeating-linear-gradient(to bottom,#b8b8b8 0 1px,transparent 1px 2px)"></div>
<div class="a" style="left:11px;top:360px;width:1px;height:15px;background:repeating-linear-gradient(to bottom,#b8b8b8 0 1px,transparent 1px 2px)"></div>
<div class="a" style="left:38px;top:379px;width:7px;height:7px;background:linear-gradient(#fff,#e4e4e4);border:1px solid #b0b0b0;border-radius:1.5px"></div>
<div class="a" style="left:39.5px;top:382px;width:4px;height:1px;background:#6a7cc0"></div>
<div class="a" style="left:46px;top:382px;width:6px;height:1px;background:repeating-linear-gradient(to right,#c4c4c4 0 1px,transparent 1px 2px)"></div>
<div class="a" style="left:41px;top:375px;width:1px;height:4px;background:repeating-linear-gradient(to bottom,#b8b8b8 0 1px,transparent 1px 2px)"></div>
<div class="a" style="left:41px;top:386px;width:1px;height:4px;background:repeating-linear-gradient(to bottom,#b8b8b8 0 1px,transparent 1px 2px)"></div>
<div class="a" style="left:11px;top:375px;width:1px;height:15px;background:repeating-linear-gradient(to bottom,#b8b8b8 0 1px,transparent 1px 2px)"></div>
<div class="a" style="left:26px;top:375px;width:1px;height:15px;background:repeating-linear-gradient(to bottom,#b8b8b8 0 1px,transparent 1px 2px)"></div>
<div class="a" style="left:57px;top:397px;width:9px;height:1px;background:repeating-linear-gradient(to right,#c4c4c4 0 1px,transparent 1px 2px)"></div>
<div class="a" style="left:56px;top:390px;width:1px;height:7px;background:repeating-linear-gradient(to bottom,#b8b8b8 0 1px,transparent 1px 2px)"></div>
<div class="a" style="left:56px;top:398px;width:1px;height:7px;background:repeating-linear-gradient(to bottom,#b8b8b8 0 1px,transparent 1px 2px)"></div>
<div class="a" style="left:11px;top:390px;width:1px;height:15px;background:repeating-linear-gradient(to bottom,#b8b8b8 0 1px,transparent 1px 2px)"></div>
<div class="a" style="left:26px;top:390px;width:1px;height:15px;background:repeating-linear-gradient(to bottom,#b8b8b8 0 1px,transparent 1px 2px)"></div>
<div class="a" style="left:41px;top:390px;width:1px;height:15px;background:repeating-linear-gradient(to bottom,#b8b8b8 0 1px,transparent 1px 2px)"></div>
<div class="a" style="left:57px;top:412px;width:9px;height:1px;background:repeating-linear-gradient(to right,#c4c4c4 0 1px,transparent 1px 2px)"></div>
<div class="a" style="left:56px;top:405px;width:1px;height:7px;background:repeating-linear-gradient(to bottom,#b8b8b8 0 1px,transparent 1px 2px)"></div>
<div class="a" style="left:56px;top:413px;width:1px;height:7px;background:repeating-linear-gradient(to bottom,#b8b8b8 0 1px,transparent 1px 2px)"></div>
<div class="a" style="left:11px;top:405px;width:1px;height:15px;background:repeating-linear-gradient(to bottom,#b8b8b8 0 1px,transparent 1px 2px)"></div>
<div class="a" style="left:26px;top:405px;width:1px;height:15px;background:repeating-linear-gradient(to bottom,#b8b8b8 0 1px,transparent 1px 2px)"></div>
<div class="a" style="left:41px;top:405px;width:1px;height:15px;background:repeating-linear-gradient(to bottom,#b8b8b8 0 1px,transparent 1px 2px)"></div>
<div class="a" style="left:57px;top:427px;width:9px;height:1px;background:repeating-linear-gradient(to right,#c4c4c4 0 1px,transparent 1px 2px)"></div>
<div class="a" style="left:56px;top:420px;width:1px;height:7px;background:repeating-linear-gradient(to bottom,#b8b8b8 0 1px,transparent 1px 2px)"></div>
<div class="a" style="left:56px;top:428px;width:1px;height:7px;background:repeating-linear-gradient(to bottom,#b8b8b8 0 1px,transparent 1px 2px)"></div>
<div class="a" style="left:11px;top:420px;width:1px;height:15px;background:repeating-linear-gradient(to bottom,#b8b8b8 0 1px,transparent 1px 2px)"></div>
<div class="a" style="left:26px;top:420px;width:1px;height:15px;background:repeating-linear-gradient(to bottom,#b8b8b8 0 1px,transparent 1px 2px)"></div>
<div class="a" style="left:41px;top:420px;width:1px;height:15px;background:repeating-linear-gradient(to bottom,#b8b8b8 0 1px,transparent 1px 2px)"></div>
<div class="a" style="left:57px;top:442px;width:9px;height:1px;background:repeating-linear-gradient(to right,#c4c4c4 0 1px,transparent 1px 2px)"></div>
<div class="a" style="left:56px;top:435px;width:1px;height:7px;background:repeating-linear-gradient(to bottom,#b8b8b8 0 1px,transparent 1px 2px)"></div>
<div class="a" style="left:11px;top:435px;width:1px;height:15px;background:repeating-linear-gradient(to bottom,#b8b8b8 0 1px,transparent 1px 2px)"></div>
<div class="a" style="left:26px;top:435px;width:1px;height:15px;background:repeating-linear-gradient(to bottom,#b8b8b8 0 1px,transparent 1px 2px)"></div>
<div class="a" style="left:41px;top:435px;width:1px;height:15px;background:repeating-linear-gradient(to bottom,#b8b8b8 0 1px,transparent 1px 2px)"></div>
<div class="a" style="left:42px;top:457px;width:9px;height:1px;background:repeating-linear-gradient(to right,#c4c4c4 0 1px,transparent 1px 2px)"></div>
<div class="a" style="left:41px;top:450px;width:1px;height:7px;background:repeating-linear-gradient(to bottom,#b8b8b8 0 1px,transparent 1px 2px)"></div>
<div class="a" style="left:11px;top:450px;width:1px;height:15px;background:repeating-linear-gradient(to bottom,#b8b8b8 0 1px,transparent 1px 2px)"></div>
<div class="a" style="left:26px;top:450px;width:1px;height:15px;background:repeating-linear-gradient(to bottom,#b8b8b8 0 1px,transparent 1px 2px)"></div>
<div class="a" style="left:23px;top:469px;width:7px;height:7px;background:linear-gradient(#fff,#e4e4e4);border:1px solid #b0b0b0;border-radius:1.5px"></div>
<div class="a" style="left:24.5px;top:472px;width:4px;height:1px;background:#6a7cc0"></div>
<div class="a" style="left:31px;top:472px;width:6px;height:1px;background:repeating-linear-gradient(to right,#c4c4c4 0 1px,transparent 1px 2px)"></div>
<div class="a" style="left:26px;top:465px;width:1px;height:4px;background:repeating-linear-gradient(to bottom,#b8b8b8 0 1px,transparent 1px 2px)"></div>
<div class="a" style="left:26px;top:476px;width:1px;height:4px;background:repeating-linear-gradient(to bottom,#b8b8b8 0 1px,transparent 1px 2px)"></div>
<div class="a" style="left:11px;top:465px;width:1px;height:15px;background:repeating-linear-gradient(to bottom,#b8b8b8 0 1px,transparent 1px 2px)"></div>
<div class="a" style="left:38px;top:484px;width:7px;height:7px;background:linear-gradient(#fff,#e4e4e4);border:1px solid #b0b0b0;border-radius:1.5px"></div>
<div class="a" style="left:39.5px;top:487px;width:4px;height:1px;background:#6a7cc0"></div>
<div class="a" style="left:46px;top:487px;width:6px;height:1px;background:repeating-linear-gradient(to right,#c4c4c4 0 1px,transparent 1px 2px)"></div>
<div class="a" style="left:41px;top:480px;width:1px;height:4px;background:repeating-linear-gradient(to bottom,#b8b8b8 0 1px,transparent 1px 2px)"></div>
<div class="a" style="left:41px;top:491px;width:1px;height:4px;background:repeating-linear-gradient(to bottom,#b8b8b8 0 1px,transparent 1px 2px)"></div>
<div class="a" style="left:11px;top:480px;width:1px;height:15px;background:repeating-linear-gradient(to bottom,#b8b8b8 0 1px,transparent 1px 2px)"></div>
<div class="a" style="left:26px;top:480px;width:1px;height:15px;background:repeating-linear-gradient(to bottom,#b8b8b8 0 1px,transparent 1px 2px)"></div>
<div class="a" style="left:57px;top:502px;width:9px;height:1px;background:repeating-linear-gradient(to right,#c4c4c4 0 1px,transparent 1px 2px)"></div>
<div class="a" style="left:56px;top:495px;width:1px;height:7px;background:repeating-linear-gradient(to bottom,#b8b8b8 0 1px,transparent 1px 2px)"></div>
<div class="a" style="left:56px;top:503px;width:1px;height:7px;background:repeating-linear-gradient(to bottom,#b8b8b8 0 1px,transparent 1px 2px)"></div>
<div class="a" style="left:11px;top:495px;width:1px;height:15px;background:repeating-linear-gradient(to bottom,#b8b8b8 0 1px,transparent 1px 2px)"></div>
<div class="a" style="left:26px;top:495px;width:1px;height:15px;background:repeating-linear-gradient(to bottom,#b8b8b8 0 1px,transparent 1px 2px)"></div>
<div class="a" style="left:41px;top:495px;width:1px;height:15px;background:repeating-linear-gradient(to bottom,#b8b8b8 0 1px,transparent 1px 2px)"></div>
<div class="a" style="left:57px;top:517px;width:9px;height:1px;background:repeating-linear-gradient(to right,#c4c4c4 0 1px,transparent 1px 2px)"></div>
<div class="a" style="left:56px;top:510px;width:1px;height:7px;background:repeating-linear-gradient(to bottom,#b8b8b8 0 1px,transparent 1px 2px)"></div>
<div class="a" style="left:56px;top:518px;width:1px;height:7px;background:repeating-linear-gradient(to bottom,#b8b8b8 0 1px,transparent 1px 2px)"></div>
<div class="a" style="left:11px;top:510px;width:1px;height:15px;background:repeating-linear-gradient(to bottom,#b8b8b8 0 1px,transparent 1px 2px)"></div>
<div class="a" style="left:26px;top:510px;width:1px;height:15px;background:repeating-linear-gradient(to bottom,#b8b8b8 0 1px,transparent 1px 2px)"></div>
<div class="a" style="left:41px;top:510px;width:1px;height:15px;background:repeating-linear-gradient(to bottom,#b8b8b8 0 1px,transparent 1px 2px)"></div>
<div class="a" style="left:57px;top:532px;width:9px;height:1px;background:repeating-linear-gradient(to right,#c4c4c4 0 1px,transparent 1px 2px)"></div>
<div class="a" style="left:56px;top:525px;width:1px;height:7px;background:repeating-linear-gradient(to bottom,#b8b8b8 0 1px,transparent 1px 2px)"></div>
<div class="a" style="left:56px;top:533px;width:1px;height:7px;background:repeating-linear-gradient(to bottom,#b8b8b8 0 1px,transparent 1px 2px)"></div>
<div class="a" style="left:11px;top:525px;width:1px;height:15px;background:repeating-linear-gradient(to bottom,#b8b8b8 0 1px,transparent 1px 2px)"></div>
<div class="a" style="left:26px;top:525px;width:1px;height:15px;background:repeating-linear-gradient(to bottom,#b8b8b8 0 1px,transparent 1px 2px)"></div>
<div class="a" style="left:41px;top:525px;width:1px;height:15px;background:repeating-linear-gradient(to bottom,#b8b8b8 0 1px,transparent 1px 2px)"></div>
<div class="a" style="left:57px;top:547px;width:9px;height:1px;background:repeating-linear-gradient(to right,#c4c4c4 0 1px,transparent 1px 2px)"></div>
<div class="a" style="left:56px;top:540px;width:1px;height:7px;background:repeating-linear-gradient(to bottom,#b8b8b8 0 1px,transparent 1px 2px)"></div>
<div class="a" style="left:11px;top:540px;width:1px;height:15px;background:repeating-linear-gradient(to bottom,#b8b8b8 0 1px,transparent 1px 2px)"></div>
<div class="a" style="left:26px;top:540px;width:1px;height:15px;background:repeating-linear-gradient(to bottom,#b8b8b8 0 1px,transparent 1px 2px)"></div>
<div class="a" style="left:41px;top:540px;width:1px;height:15px;background:repeating-linear-gradient(to bottom,#b8b8b8 0 1px,transparent 1px 2px)"></div>
<div class="a" style="left:42px;top:562px;width:9px;height:1px;background:repeating-linear-gradient(to right,#c4c4c4 0 1px,transparent 1px 2px)"></div>
<div class="a" style="left:41px;top:555px;width:1px;height:7px;background:repeating-linear-gradient(to bottom,#b8b8b8 0 1px,transparent 1px 2px)"></div>
<div class="a" style="left:11px;top:555px;width:1px;height:15px;background:repeating-linear-gradient(to bottom,#b8b8b8 0 1px,transparent 1px 2px)"></div>
<div class="a" style="left:26px;top:555px;width:1px;height:15px;background:repeating-linear-gradient(to bottom,#b8b8b8 0 1px,transparent 1px 2px)"></div>
<div class="a" style="left:23px;top:574px;width:7px;height:7px;background:linear-gradient(#fff,#e4e4e4);border:1px solid #b0b0b0;border-radius:1.5px"></div>
<div class="a" style="left:24.5px;top:577px;width:4px;height:1px;background:#6a7cc0"></div>
<div class="a" style="left:31px;top:577px;width:6px;height:1px;background:repeating-linear-gradient(to right,#c4c4c4 0 1px,transparent 1px 2px)"></div>
<div class="a" style="left:26px;top:570px;width:1px;height:4px;background:repeating-linear-gradient(to bottom,#b8b8b8 0 1px,transparent 1px 2px)"></div>
<div class="a" style="left:26px;top:581px;width:1px;height:4px;background:repeating-linear-gradient(to bottom,#b8b8b8 0 1px,transparent 1px 2px)"></div>
<div class="a" style="left:11px;top:570px;width:1px;height:15px;background:repeating-linear-gradient(to bottom,#b8b8b8 0 1px,transparent 1px 2px)"></div>
<div class="a" style="left:38px;top:589px;width:7px;height:7px;background:linear-gradient(#fff,#e4e4e4);border:1px solid #b0b0b0;border-radius:1.5px"></div>
<div class="a" style="left:39.5px;top:592px;width:4px;height:1px;background:#6a7cc0"></div>
<div class="a" style="left:46px;top:592px;width:6px;height:1px;background:repeating-linear-gradient(to right,#c4c4c4 0 1px,transparent 1px 2px)"></div>
<div class="a" style="left:41px;top:585px;width:1px;height:4px;background:repeating-linear-gradient(to bottom,#b8b8b8 0 1px,transparent 1px 2px)"></div>
<div class="a" style="left:41px;top:596px;width:1px;height:4px;background:repeating-linear-gradient(to bottom,#b8b8b8 0 1px,transparent 1px 2px)"></div>
<div class="a" style="left:11px;top:585px;width:1px;height:15px;background:repeating-linear-gradient(to bottom,#b8b8b8 0 1px,transparent 1px 2px)"></div>
<div class="a" style="left:26px;top:585px;width:1px;height:15px;background:repeating-linear-gradient(to bottom,#b8b8b8 0 1px,transparent 1px 2px)"></div>
<div class="a" style="left:57px;top:607px;width:9px;height:1px;background:repeating-linear-gradient(to right,#c4c4c4 0 1px,transparent 1px 2px)"></div>
<div class="a" style="left:56px;top:600px;width:1px;height:7px;background:repeating-linear-gradient(to bottom,#b8b8b8 0 1px,transparent 1px 2px)"></div>
<div class="a" style="left:56px;top:608px;width:1px;height:7px;background:repeating-linear-gradient(to bottom,#b8b8b8 0 1px,transparent 1px 2px)"></div>
<div class="a" style="left:11px;top:600px;width:1px;height:15px;background:repeating-linear-gradient(to bottom,#b8b8b8 0 1px,transparent 1px 2px)"></div>
<div class="a" style="left:26px;top:600px;width:1px;height:15px;background:repeating-linear-gradient(to bottom,#b8b8b8 0 1px,transparent 1px 2px)"></div>
<div class="a" style="left:41px;top:600px;width:1px;height:15px;background:repeating-linear-gradient(to bottom,#b8b8b8 0 1px,transparent 1px 2px)"></div>
<div class="a" style="left:57px;top:622px;width:9px;height:1px;background:repeating-linear-gradient(to right,#c4c4c4 0 1px,transparent 1px 2px)"></div>
<div class="a" style="left:56px;top:615px;width:1px;height:7px;background:repeating-linear-gradient(to bottom,#b8b8b8 0 1px,transparent 1px 2px)"></div>
<div class="a" style="left:56px;top:623px;width:1px;height:7px;background:repeating-linear-gradient(to bottom,#b8b8b8 0 1px,transparent 1px 2px)"></div>
<div class="a" style="left:11px;top:615px;width:1px;height:15px;background:repeating-linear-gradient(to bottom,#b8b8b8 0 1px,transparent 1px 2px)"></div>
<div class="a" style="left:26px;top:615px;width:1px;height:15px;background:repeating-linear-gradient(to bottom,#b8b8b8 0 1px,transparent 1px 2px)"></div>
<div class="a" style="left:41px;top:615px;width:1px;height:15px;background:repeating-linear-gradient(to bottom,#b8b8b8 0 1px,transparent 1px 2px)"></div>
<div class="a" style="left:57px;top:637px;width:9px;height:1px;background:repeating-linear-gradient(to right,#c4c4c4 0 1px,transparent 1px 2px)"></div>
<div class="a" style="left:56px;top:630px;width:1px;height:7px;background:repeating-linear-gradient(to bottom,#b8b8b8 0 1px,transparent 1px 2px)"></div>
<div class="a" style="left:56px;top:638px;width:1px;height:7px;background:repeating-linear-gradient(to bottom,#b8b8b8 0 1px,transparent 1px 2px)"></div>
<div class="a" style="left:11px;top:630px;width:1px;height:15px;background:repeating-linear-gradient(to bottom,#b8b8b8 0 1px,transparent 1px 2px)"></div>
<div class="a" style="left:26px;top:630px;width:1px;height:15px;background:repeating-linear-gradient(to bottom,#b8b8b8 0 1px,transparent 1px 2px)"></div>
<div class="a" style="left:41px;top:630px;width:1px;height:15px;background:repeating-linear-gradient(to bottom,#b8b8b8 0 1px,transparent 1px 2px)"></div>
<div class="a" style="left:57px;top:652px;width:9px;height:1px;background:repeating-linear-gradient(to right,#c4c4c4 0 1px,transparent 1px 2px)"></div>
<div class="a" style="left:56px;top:645px;width:1px;height:7px;background:repeating-linear-gradient(to bottom,#b8b8b8 0 1px,transparent 1px 2px)"></div>
<div class="a" style="left:11px;top:645px;width:1px;height:15px;background:repeating-linear-gradient(to bottom,#b8b8b8 0 1px,transparent 1px 2px)"></div>
<div class="a" style="left:26px;top:645px;width:1px;height:15px;background:repeating-linear-gradient(to bottom,#b8b8b8 0 1px,transparent 1px 2px)"></div>
<div class="a" style="left:41px;top:645px;width:1px;height:15px;background:repeating-linear-gradient(to bottom,#b8b8b8 0 1px,transparent 1px 2px)"></div>
<div class="a" style="left:42px;top:667px;width:9px;height:1px;background:repeating-linear-gradient(to right,#c4c4c4 0 1px,transparent 1px 2px)"></div>
<div class="a" style="left:41px;top:660px;width:1px;height:7px;background:repeating-linear-gradient(to bottom,#b8b8b8 0 1px,transparent 1px 2px)"></div>
<div class="a" style="left:11px;top:660px;width:1px;height:15px;background:repeating-linear-gradient(to bottom,#b8b8b8 0 1px,transparent 1px 2px)"></div>
<div class="a" style="left:26px;top:660px;width:1px;height:15px;background:repeating-linear-gradient(to bottom,#b8b8b8 0 1px,transparent 1px 2px)"></div>
<div class="a" style="left:23px;top:679px;width:7px;height:7px;background:linear-gradient(#fff,#e4e4e4);border:1px solid #b0b0b0;border-radius:1.5px"></div>
<div class="a" style="left:24.5px;top:682px;width:4px;height:1px;background:#6a7cc0"></div>
<div class="a" style="left:31px;top:682px;width:6px;height:1px;background:repeating-linear-gradient(to right,#c4c4c4 0 1px,transparent 1px 2px)"></div>
<div class="a" style="left:26px;top:675px;width:1px;height:4px;background:repeating-linear-gradient(to bottom,#b8b8b8 0 1px,transparent 1px 2px)"></div>
<div class="a" style="left:26px;top:686px;width:1px;height:4px;background:repeating-linear-gradient(to bottom,#b8b8b8 0 1px,transparent 1px 2px)"></div>
<div class="a" style="left:11px;top:675px;width:1px;height:15px;background:repeating-linear-gradient(to bottom,#b8b8b8 0 1px,transparent 1px 2px)"></div>
<div class="a" style="left:38px;top:694px;width:7px;height:7px;background:linear-gradient(#fff,#e4e4e4);border:1px solid #b0b0b0;border-radius:1.5px"></div>
<div class="a" style="left:39.5px;top:697px;width:4px;height:1px;background:#6a7cc0"></div>
<div class="a" style="left:46px;top:697px;width:6px;height:1px;background:repeating-linear-gradient(to right,#c4c4c4 0 1px,transparent 1px 2px)"></div>
<div class="a" style="left:41px;top:690px;width:1px;height:4px;background:repeating-linear-gradient(to bottom,#b8b8b8 0 1px,transparent 1px 2px)"></div>
<div class="a" style="left:41px;top:701px;width:1px;height:4px;background:repeating-linear-gradient(to bottom,#b8b8b8 0 1px,transparent 1px 2px)"></div>
<div class="a" style="left:11px;top:690px;width:1px;height:15px;background:repeating-linear-gradient(to bottom,#b8b8b8 0 1px,transparent 1px 2px)"></div>
<div class="a" style="left:26px;top:690px;width:1px;height:15px;background:repeating-linear-gradient(to bottom,#b8b8b8 0 1px,transparent 1px 2px)"></div>
<div class="a" style="left:57px;top:712px;width:9px;height:1px;background:repeating-linear-gradient(to right,#c4c4c4 0 1px,transparent 1px 2px)"></div>
<div class="a" style="left:56px;top:705px;width:1px;height:7px;background:repeating-linear-gradient(to bottom,#b8b8b8 0 1px,transparent 1px 2px)"></div>
<div class="a" style="left:56px;top:713px;width:1px;height:7px;background:repeating-linear-gradient(to bottom,#b8b8b8 0 1px,transparent 1px 2px)"></div>
<div class="a" style="left:11px;top:705px;width:1px;height:15px;background:repeating-linear-gradient(to bottom,#b8b8b8 0 1px,transparent 1px 2px)"></div>
<div class="a" style="left:26px;top:705px;width:1px;height:15px;background:repeating-linear-gradient(to bottom,#b8b8b8 0 1px,transparent 1px 2px)"></div>
<div class="a" style="left:41px;top:705px;width:1px;height:15px;background:repeating-linear-gradient(to bottom,#b8b8b8 0 1px,transparent 1px 2px)"></div>
<div class="a" style="left:57px;top:727px;width:9px;height:1px;background:repeating-linear-gradient(to right,#c4c4c4 0 1px,transparent 1px 2px)"></div>
<div class="a" style="left:56px;top:720px;width:1px;height:7px;background:repeating-linear-gradient(to bottom,#b8b8b8 0 1px,transparent 1px 2px)"></div>
<div class="a" style="left:56px;top:728px;width:1px;height:7px;background:repeating-linear-gradient(to bottom,#b8b8b8 0 1px,transparent 1px 2px)"></div>
<div class="a" style="left:11px;top:720px;width:1px;height:15px;background:repeating-linear-gradient(to bottom,#b8b8b8 0 1px,transparent 1px 2px)"></div>
<div class="a" style="left:26px;top:720px;width:1px;height:15px;background:repeating-linear-gradient(to bottom,#b8b8b8 0 1px,transparent 1px 2px)"></div>
<div class="a" style="left:41px;top:720px;width:1px;height:15px;background:repeating-linear-gradient(to bottom,#b8b8b8 0 1px,transparent 1px 2px)"></div>
<div class="a" style="left:57px;top:742px;width:9px;height:1px;background:repeating-linear-gradient(to right,#c4c4c4 0 1px,transparent 1px 2px)"></div>
<div class="a" style="left:56px;top:735px;width:1px;height:7px;background:repeating-linear-gradient(to bottom,#b8b8b8 0 1px,transparent 1px 2px)"></div>
<div class="a" style="left:56px;top:743px;width:1px;height:7px;background:repeating-linear-gradient(to bottom,#b8b8b8 0 1px,transparent 1px 2px)"></div>
<div class="a" style="left:11px;top:735px;width:1px;height:15px;background:repeating-linear-gradient(to bottom,#b8b8b8 0 1px,transparent 1px 2px)"></div>
<div class="a" style="left:26px;top:735px;width:1px;height:15px;background:repeating-linear-gradient(to bottom,#b8b8b8 0 1px,transparent 1px 2px)"></div>
<div class="a" style="left:41px;top:735px;width:1px;height:15px;background:repeating-linear-gradient(to bottom,#b8b8b8 0 1px,transparent 1px 2px)"></div>
<div class="a" style="left:57px;top:757px;width:9px;height:1px;background:repeating-linear-gradient(to right,#c4c4c4 0 1px,transparent 1px 2px)"></div>
<div class="a" style="left:56px;top:750px;width:1px;height:7px;background:repeating-linear-gradient(to bottom,#b8b8b8 0 1px,transparent 1px 2px)"></div>
<div class="a" style="left:11px;top:750px;width:1px;height:15px;background:repeating-linear-gradient(to bottom,#b8b8b8 0 1px,transparent 1px 2px)"></div>
<div class="a" style="left:26px;top:750px;width:1px;height:15px;background:repeating-linear-gradient(to bottom,#b8b8b8 0 1px,transparent 1px 2px)"></div>
<div class="a" style="left:41px;top:750px;width:1px;height:15px;background:repeating-linear-gradient(to bottom,#b8b8b8 0 1px,transparent 1px 2px)"></div>
<div class="a" style="left:42px;top:772px;width:9px;height:1px;background:repeating-linear-gradient(to right,#c4c4c4 0 1px,transparent 1px 2px)"></div>
<div class="a" style="left:41px;top:765px;width:1px;height:7px;background:repeating-linear-gradient(to bottom,#b8b8b8 0 1px,transparent 1px 2px)"></div>
<div class="a" style="left:11px;top:765px;width:1px;height:15px;background:repeating-linear-gradient(to bottom,#b8b8b8 0 1px,transparent 1px 2px)"></div>
<div class="a" style="left:26px;top:765px;width:1px;height:15px;background:repeating-linear-gradient(to bottom,#b8b8b8 0 1px,transparent 1px 2px)"></div>
<div class="a" style="left:23px;top:784px;width:7px;height:7px;background:linear-gradient(#fff,#e4e4e4);border:1px solid #b0b0b0;border-radius:1.5px"></div>
<div class="a" style="left:24.5px;top:787px;width:4px;height:1px;background:#6a7cc0"></div>
<div class="a" style="left:31px;top:787px;width:6px;height:1px;background:repeating-linear-gradient(to right,#c4c4c4 0 1px,transparent 1px 2px)"></div>
<div class="a" style="left:26px;top:780px;width:1px;height:4px;background:repeating-linear-gradient(to bottom,#b8b8b8 0 1px,transparent 1px 2px)"></div>
<div class="a" style="left:26px;top:791px;width:1px;height:4px;background:repeating-linear-gradient(to bottom,#b8b8b8 0 1px,transparent 1px 2px)"></div>
<div class="a" style="left:11px;top:780px;width:1px;height:15px;background:repeating-linear-gradient(to bottom,#b8b8b8 0 1px,transparent 1px 2px)"></div>
<div class="a" style="left:38px;top:799px;width:7px;height:7px;background:linear-gradient(#fff,#e4e4e4);border:1px solid #b0b0b0;border-radius:1.5px"></div>
<div class="a" style="left:39.5px;top:802px;width:4px;height:1px;background:#6a7cc0"></div>
<div class="a" style="left:46px;top:802px;width:6px;height:1px;background:repeating-linear-gradient(to right,#c4c4c4 0 1px,transparent 1px 2px)"></div>
<div class="a" style="left:41px;top:795px;width:1px;height:4px;background:repeating-linear-gradient(to bottom,#b8b8b8 0 1px,transparent 1px 2px)"></div>
<div class="a" style="left:41px;top:806px;width:1px;height:4px;background:repeating-linear-gradient(to bottom,#b8b8b8 0 1px,transparent 1px 2px)"></div>
<div class="a" style="left:11px;top:795px;width:1px;height:15px;background:repeating-linear-gradient(to bottom,#b8b8b8 0 1px,transparent 1px 2px)"></div>
<div class="a" style="left:26px;top:795px;width:1px;height:15px;background:repeating-linear-gradient(to bottom,#b8b8b8 0 1px,transparent 1px 2px)"></div>
<div class="a" style="left:57px;top:817px;width:9px;height:1px;background:repeating-linear-gradient(to right,#c4c4c4 0 1px,transparent 1px 2px)"></div>
<div class="a" style="left:56px;top:810px;width:1px;height:7px;background:repeating-linear-gradient(to bottom,#b8b8b8 0 1px,transparent 1px 2px)"></div>
<div class="a" style="left:56px;top:818px;width:1px;height:7px;background:repeating-linear-gradient(to bottom,#b8b8b8 0 1px,transparent 1px 2px)"></div>
<div class="a" style="left:11px;top:810px;width:1px;height:15px;background:repeating-linear-gradient(to bottom,#b8b8b8 0 1px,transparent 1px 2px)"></div>
<div class="a" style="left:26px;top:810px;width:1px;height:15px;background:repeating-linear-gradient(to bottom,#b8b8b8 0 1px,transparent 1px 2px)"></div>
<div class="a" style="left:41px;top:810px;width:1px;height:15px;background:repeating-linear-gradient(to bottom,#b8b8b8 0 1px,transparent 1px 2px)"></div>
<div class="a" style="left:57px;top:832px;width:9px;height:1px;background:repeating-linear-gradient(to right,#c4c4c4 0 1px,transparent 1px 2px)"></div>
<div class="a" style="left:56px;top:825px;width:1px;height:7px;background:repeating-linear-gradient(to bottom,#b8b8b8 0 1px,transparent 1px 2px)"></div>
<div class="a" style="left:56px;top:833px;width:1px;height:7px;background:repeating-linear-gradient(to bottom,#b8b8b8 0 1px,transparent 1px 2px)"></div>
<div class="a" style="left:11px;top:825px;width:1px;height:15px;background:repeating-linear-gradient(to bottom,#b8b8b8 0 1px,transparent 1px 2px)"></div>
<div class="a" style="left:26px;top:825px;width:1px;height:15px;background:repeating-linear-gradient(to bottom,#b8b8b8 0 1px,transparent 1px 2px)"></div>
<div class="a" style="left:41px;top:825px;width:1px;height:15px;background:repeating-linear-gradient(to bottom,#b8b8b8 0 1px,transparent 1px 2px)"></div>
<div class="a" style="left:57px;top:847px;width:9px;height:1px;background:repeating-linear-gradient(to right,#c4c4c4 0 1px,transparent 1px 2px)"></div>
<div class="a" style="left:56px;top:840px;width:1px;height:7px;background:repeating-linear-gradient(to bottom,#b8b8b8 0 1px,transparent 1px 2px)"></div>
<div class="a" style="left:56px;top:848px;width:1px;height:7px;background:repeating-linear-gradient(to bottom,#b8b8b8 0 1px,transparent 1px 2px)"></div>
<div class="a" style="left:11px;top:840px;width:1px;height:15px;background:repeating-linear-gradient(to bottom,#b8b8b8 0 1px,transparent 1px 2px)"></div>
<div class="a" style="left:26px;top:840px;width:1px;height:15px;background:repeating-linear-gradient(to bottom,#b8b8b8 0 1px,transparent 1px 2px)"></div>
<div class="a" style="left:41px;top:840px;width:1px;height:15px;background:repeating-linear-gradient(to bottom,#b8b8b8 0 1px,transparent 1px 2px)"></div>
<div class="a" style="left:57px;top:862px;width:9px;height:1px;background:repeating-linear-gradient(to right,#c4c4c4 0 1px,transparent 1px 2px)"></div>
<div class="a" style="left:56px;top:855px;width:1px;height:7px;background:repeating-linear-gradient(to bottom,#b8b8b8 0 1px,transparent 1px 2px)"></div>
<div class="a" style="left:11px;top:855px;width:1px;height:15px;background:repeating-linear-gradient(to bottom,#b8b8b8 0 1px,transparent 1px 2px)"></div>
<div class="a" style="left:26px;top:855px;width:1px;height:15px;background:repeating-linear-gradient(to bottom,#b8b8b8 0 1px,transparent 1px 2px)"></div>
<div class="a" style="left:41px;top:855px;width:1px;height:15px;background:repeating-linear-gradient(to bottom,#b8b8b8 0 1px,transparent 1px 2px)"></div>
<div class="a" style="left:42px;top:877px;width:9px;height:1px;background:repeating-linear-gradient(to right,#c4c4c4 0 1px,transparent 1px 2px)"></div>
<div class="a" style="left:41px;top:870px;width:1px;height:7px;background:repeating-linear-gradient(to bottom,#b8b8b8 0 1px,transparent 1px 2px)"></div>
<div class="a" style="left:11px;top:870px;width:1px;height:15px;background:repeating-linear-gradient(to bottom,#b8b8b8 0 1px,transparent 1px 2px)"></div>
<div class="a" style="left:26px;top:870px;width:1px;height:15px;background:repeating-linear-gradient(to bottom,#b8b8b8 0 1px,transparent 1px 2px)"></div>
<div class="a" style="left:23px;top:889px;width:7px;height:7px;background:linear-gradient(#fff,#e4e4e4);border:1px solid #b0b0b0;border-radius:1.5px"></div>
<div class="a" style="left:24.5px;top:892px;width:4px;height:1px;background:#6a7cc0"></div>
<div class="a" style="left:31px;top:892px;width:6px;height:1px;background:repeating-linear-gradient(to right,#c4c4c4 0 1px,transparent 1px 2px)"></div>
<div class="a" style="left:26px;top:885px;width:1px;height:4px;background:repeating-linear-gradient(to bottom,#b8b8b8 0 1px,transparent 1px 2px)"></div>
<div class="a" style="left:26px;top:896px;width:1px;height:4px;background:repeating-linear-gradient(to bottom,#b8b8b8 0 1px,transparent 1px 2px)"></div>
<div class="a" style="left:11px;top:885px;width:1px;height:15px;background:repeating-linear-gradient(to bottom,#b8b8b8 0 1px,transparent 1px 2px)"></div>
<div class="a" style="left:38px;top:904px;width:7px;height:7px;background:linear-gradient(#fff,#e4e4e4);border:1px solid #b0b0b0;border-radius:1.5px"></div>
<div class="a" style="left:39.5px;top:907px;width:4px;height:1px;background:#6a7cc0"></div>
<div class="a" style="left:46px;top:907px;width:6px;height:1px;background:repeating-linear-gradient(to right,#c4c4c4 0 1px,transparent 1px 2px)"></div>
<div class="a" style="left:41px;top:900px;width:1px;height:4px;background:repeating-linear-gradient(to bottom,#b8b8b8 0 1px,transparent 1px 2px)"></div>
<div class="a" style="left:41px;top:911px;width:1px;height:4px;background:repeating-linear-gradient(to bottom,#b8b8b8 0 1px,transparent 1px 2px)"></div>
<div class="a" style="left:11px;top:900px;width:1px;height:15px;background:repeating-linear-gradient(to bottom,#b8b8b8 0 1px,transparent 1px 2px)"></div>
<div class="a" style="left:26px;top:900px;width:1px;height:15px;background:repeating-linear-gradient(to bottom,#b8b8b8 0 1px,transparent 1px 2px)"></div>
<div class="a" style="left:149px;top:0px;width:1px;height:910px;background:repeating-linear-gradient(to bottom,#c0c0c0 0 1px,transparent 1px 2px)"></div>
<div class="a" style="left:299px;top:0px;width:1px;height:910px;background:repeating-linear-gradient(to bottom,#e8e8e8 0 1px,transparent 1px 2px)"></div>
<div class="a" style="left:449px;top:0px;width:1px;height:910px;background:repeating-linear-gradient(to bottom,#ececec 0 1px,transparent 1px 2px)"></div>
</div>
<div class="a" style="left:1900px;top:96px;width:13px;height:910px;background:#f0f0f0"></div>
<svg class="a" style="left:1902px;top:100px" width="8" height="6" viewBox="0 0 8 6"><path d="M1 4.8L4 1.8L7 4.8" fill="none" stroke="#505050" stroke-width="1.6"/></svg>
<svg class="a" style="left:1902px;top:997px" width="8" height="6" viewBox="0 0 8 6"><path d="M1 1.2L4 4.2L7 1.2" fill="none" stroke="#505050" stroke-width="1.6"/></svg>
<div class="a" style="left:1901px;top:109px;width:11px;height:267px;background:#cdcdcd"></div>
<div class="a" style="left:715px;top:1009px;width:1200px;height:18px;background:#f0f0f0"></div>
<div class="a" style="left:715px;top:1026px;width:1202px;height:1px;background:#e3e3e3"></div>
<div class="a" style="left:715px;top:1009px;width:38px;height:17px;background:#fff"></div>
<div class="t" style="left:720.5px;top:1010.8px;line-height:15px;height:15px;">View</div>
<div class="a" style="left:753px;top:1011px;width:76px;height:16px;background:#f0f0f0;border:1px solid #d9d9d9;border-top:none"></div>
<div class="t" style="left:757px;top:1009.8px;line-height:15px;height:15px;word-spacing:0">Referenced By (1)</div>
<div class="a" style="left:829px;top:1011px;width:48px;height:16px;background:#f0f0f0;border:1px solid #d9d9d9;border-top:none"></div>
<div class="t" style="left:833px;top:1009.8px;line-height:15px;height:15px;">Messages</div>
<div class="a" style="left:877px;top:1011px;width:57px;height:16px;background:#f0f0f0;border:1px solid #d9d9d9;border-top:none"></div>
<div class="t" style="left:881px;top:1009.8px;line-height:15px;height:15px;letter-spacing:0">Information</div>
<div class="a" style="left:934px;top:1011px;width:55px;height:16px;background:#f0f0f0;border:1px solid #d9d9d9;border-top:none"></div>
<div class="t" style="left:938px;top:1009.8px;line-height:15px;height:15px;">What's New</div>
<div class="a" style="left:0px;top:1030px;width:1920px;height:1px;background:#dadada"></div>
<div class="t" style="left:4px;top:1032.5px;line-height:15px;height:15px;letter-spacing:-0.47px">[00:23] Background Loader: finished</div>
<div class="a" style="left:0px;top:1050px;width:1920px;height:30px;background:#0d1f2d"></div>
<svg class="a" style="left:12px;top:1059px" width="12" height="12" viewBox="0 0 12 12"><path d="M0 1.6L4.9 0.9V5.6H0ZM5.5 0.8L12 0V5.6H5.5ZM0 6.2H4.9V11L0 10.3ZM5.5 6.2H12V12L5.5 11.1Z" fill="#fff"/></svg>
<svg class="a" style="left:46px;top:1055px" width="20" height="20" viewBox="0 0 20 20"><ellipse cx="10" cy="10" rx="9" ry="9.5" fill="none" stroke="#e0203a" stroke-width="2.4"/><ellipse cx="10" cy="10" rx="4" ry="7" fill="none" stroke="#e0203a" stroke-width="2"/></svg>
<svg class="a" style="left:84px;top:1055px" width="18" height="18" viewBox="0 0 18 18"><circle cx="9" cy="9" r="8.5" fill="#1b3a5c"/><circle cx="9" cy="9" r="8.5" fill="url(#sg)"/><defs><linearGradient id="sg" x1="0" y1="0" x2="0" y2="1"><stop offset="0" stop-color="#2a6fa8"/><stop offset="1" stop-color="#0c2340"/></linearGradient></defs><circle cx="11.5" cy="7" r="2.8" fill="none" stroke="#fff" stroke-width="1.2"/><path d="M1 10L7 12.5" stroke="#fff" stroke-width="2"/><circle cx="6.5" cy="12.5" r="2" fill="#fff"/></svg>
<svg class="a" style="left:121px;top:1058px" width="18" height="14" viewBox="0 0 18 14"><path d="M0 1H6L8 3H18V14H0Z" fill="#e8b830"/><rect x="0" y="5" width="18" height="9" fill="#f8d048"/><rect x="5" y="9" width="8" height="5" fill="#2a7ad0"/></svg>
<div class="a" style="left:149px;top:1050px;width:36px;height:30px;background:#123f6a"></div>
<svg class="a" style="left:157px;top:1056px" width="19" height="19" viewBox="0 0 12 12"><circle cx="6" cy="6" r="5.8" fill="#3a4048"/><circle cx="6" cy="6" r="5.1" fill="#a9b4b6"/><rect x="5.5" y="1.5" width="2.3" height="9" rx="1" fill="#e2d49a"/><rect x="3" y="3.8" width="2" height="3" fill="#e02828"/><rect x="3" y="6.8" width="1.8" height="1.2" fill="#6a8ac8"/><rect x="3" y="8" width="2" height="2.5" fill="#d02020"/><rect x="8" y="4" width="2" height="3.5" fill="#d82c2c"/><rect x="7.5" y="7.5" width="2" height="2.8" fill="#3a5aa0"/></svg>
<div class="a" style="left:41px;top:1078px;width:30px;height:2px;background:#8fb4d4"></div>
<div class="a" style="left:78px;top:1078px;width:30px;height:2px;background:#8fb4d4"></div>
<div class="a" style="left:115px;top:1078px;width:30px;height:2px;background:#8fb4d4"></div>
<div class="a" style="left:149px;top:1078px;width:36px;height:2px;background:#8fb4d4"></div>
<svg class="a" style="left:1755px;top:1061px" width="10" height="6" viewBox="0 0 10 6"><path d="M0.5 5.5L5 1L9.5 5.5" fill="none" stroke="#fff" stroke-width="1"/></svg>
<svg class="a" style="left:1772px;top:1058px" width="13" height="13" viewBox="0 0 13 13"><rect x="3.5" y="1.5" width="9" height="7" fill="none" stroke="#fff"/><rect x="0.5" y="3.5" width="3" height="6" fill="none" stroke="#fff"/><path d="M8 8.5V11M5 11.5H11" stroke="#fff"/></svg>
<svg class="a" style="left:1789px;top:1058px" width="14" height="13" viewBox="0 0 14 13"><path d="M0.5 4.5H3L6.5 1V12L3 8.5H0.5Z" fill="none" stroke="#fff"/><path d="M8.5 4Q10 6.5 8.5 9" fill="none" stroke="#fff"/><path d="M10.5 2.5Q13 6.5 10.5 10.5" fill="none" stroke="#888"/></svg>
<div class="t" style="left:1810.5px;top:1057.0px;line-height:15px;height:15px;color:#e8e8e8;font-size:9px;letter-spacing:0;-webkit-text-stroke:0">РУС</div>
<div class="t" style="left:1837.5px;top:1050.0px;line-height:15px;height:15px;color:#e8e8e8;font-size:9.5px;letter-spacing:-0.3px;word-spacing:0;-webkit-text-stroke:0">12:06 AM</div>
<div class="t" style="left:1839px;top:1063.5px;line-height:15px;height:15px;color:#e8e8e8;font-size:9.5px;letter-spacing:-0.3px;-webkit-text-stroke:0">3/1/2024</div>
<svg class="a" style="left:1889px;top:1058px" width="13" height="14" viewBox="0 0 13 14"><path d="M0.5 0.5H12.5V10.5H8L5.5 13V10.5H0.5Z" fill="none" stroke="#fff"/></svg>
<div class="a" style="left:1916px;top:1050px;width:1px;height:30px;background:#5a6a78"></div>
</body></html>
